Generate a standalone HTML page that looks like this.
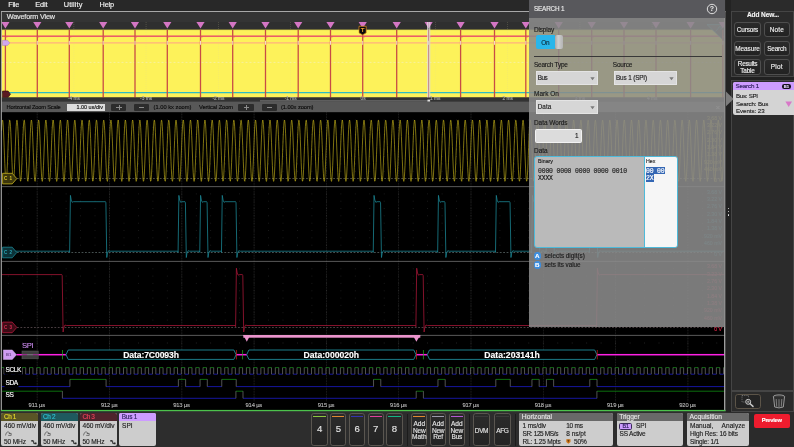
<!DOCTYPE html>
<html lang="en"><head><meta charset="utf-8"><title>Oscilloscope - Search 1</title>
<style>
html,body{margin:0;padding:0;background:#2d2d2d;}
body{width:794px;height:447px;overflow:hidden;position:relative;font-family:"Liberation Sans",sans-serif;}
#root{position:absolute;left:0;top:0;width:794px;height:447px;overflow:hidden;will-change:transform;}
.t{position:absolute;white-space:nowrap;-webkit-text-stroke:0.14px currentColor;}
.b{position:absolute;box-sizing:border-box;}
svg{position:absolute;left:0;top:0;}
</style></head>
<body><div id="root">
<svg width="794" height="447" viewBox="0 0 794 447">
<defs><clipPath id="cpw"><rect x="1.5" y="12" width="723" height="399"/></clipPath></defs>
<rect x="0" y="0" width="794" height="447" fill="#2d2d2d"/>
<rect x="0" y="0" width="726" height="11.2" fill="#282828"/>
<rect x="1" y="11.2" width="724.5" height="0.9" fill="#c8c8c8"/>
<rect x="1.5" y="12" width="723" height="10" fill="#343434"/>
<rect x="1.5" y="22" width="723" height="8" fill="#2f2f2f"/>
<rect x="1.5" y="29.7" width="723.0" height="67.8" fill="#fdf25a"/>
<rect x="1.5" y="29.5" width="723.0" height="0.6" fill="#8a8430" opacity="0.6"/>
<line x1="73.8" y1="22" x2="73.8" y2="98" stroke="#d8d0a0" stroke-width="0.5" stroke-dasharray="1 1" opacity="0.4"/>
<line x1="146.1" y1="22" x2="146.1" y2="98" stroke="#d8d0a0" stroke-width="0.5" stroke-dasharray="1 1" opacity="0.4"/>
<line x1="218.4" y1="22" x2="218.4" y2="98" stroke="#d8d0a0" stroke-width="0.5" stroke-dasharray="1 1" opacity="0.4"/>
<line x1="290.7" y1="22" x2="290.7" y2="98" stroke="#d8d0a0" stroke-width="0.5" stroke-dasharray="1 1" opacity="0.4"/>
<line x1="363.0" y1="22" x2="363.0" y2="98" stroke="#d8d0a0" stroke-width="0.5" stroke-dasharray="1 1" opacity="0.4"/>
<line x1="435.3" y1="22" x2="435.3" y2="98" stroke="#d8d0a0" stroke-width="0.5" stroke-dasharray="1 1" opacity="0.4"/>
<line x1="507.6" y1="22" x2="507.6" y2="98" stroke="#d8d0a0" stroke-width="0.5" stroke-dasharray="1 1" opacity="0.4"/>
<line x1="579.9" y1="22" x2="579.9" y2="98" stroke="#d8d0a0" stroke-width="0.5" stroke-dasharray="1 1" opacity="0.4"/>
<line x1="652.2" y1="22" x2="652.2" y2="98" stroke="#d8d0a0" stroke-width="0.5" stroke-dasharray="1 1" opacity="0.4"/>
<line x1="1.5" y1="62.4" x2="724.5" y2="62.4" stroke="#f4f0c8" stroke-width="0.6" stroke-dasharray="2 2"/>
<rect x="1.5" y="35.5" width="723.0" height="1.35" fill="#e8466a"/>
<rect x="1.5" y="42.1" width="723.0" height="1.5" fill="#ffbc78"/>
<rect x="1.5" y="92.0" width="723.0" height="1.25" fill="#2cbcc4"/>
<path d="M707 24.6 L724.5 24.6 L724.5 41.5 Z" fill="#444" stroke="#2c9aa8" stroke-width="0.7"/><path d="M715.5 31.5 l3 -3.4 M718.5 28 a1.5 1.5 0 1 1 2 1.5" stroke="#2c9aa8" stroke-width="0.7" fill="none"/>
<rect x="4.75" y="30" width="1.3" height="69" fill="#c84c46"/>
<rect x="4.90" y="40.8" width="1" height="4" fill="#fff2e0" opacity="0.85"/>
<rect x="5.40" y="36.5" width="2" height="0.8" fill="#ea5068"/>
<path d="M1.30 22 L9.50 22 L5.40 28.4 Z" fill="#d476c4" clip-path="url(#cpw)"/>
<rect x="36.65" y="30" width="1.3" height="69" fill="#c84c46"/>
<rect x="36.80" y="40.8" width="1" height="4" fill="#fff2e0" opacity="0.85"/>
<rect x="37.30" y="36.5" width="2" height="0.8" fill="#ea5068"/>
<path d="M33.20 22 L41.40 22 L37.30 28.4 Z" fill="#d476c4" clip-path="url(#cpw)"/>
<rect x="68.65" y="30" width="1.3" height="69" fill="#c84c46"/>
<rect x="68.80" y="40.8" width="1" height="4" fill="#fff2e0" opacity="0.85"/>
<rect x="69.30" y="36.5" width="2" height="0.8" fill="#ea5068"/>
<path d="M65.20 22 L73.40 22 L69.30 28.4 Z" fill="#d476c4" clip-path="url(#cpw)"/>
<rect x="102.55" y="30" width="1.3" height="69" fill="#c84c46"/>
<rect x="102.70" y="40.8" width="1" height="4" fill="#fff2e0" opacity="0.85"/>
<rect x="103.20" y="36.5" width="2" height="0.8" fill="#ea5068"/>
<path d="M99.10 22 L107.30 22 L103.20 28.4 Z" fill="#d476c4" clip-path="url(#cpw)"/>
<rect x="134.35" y="30" width="1.3" height="69" fill="#c84c46"/>
<rect x="134.50" y="40.8" width="1" height="4" fill="#fff2e0" opacity="0.85"/>
<rect x="135.00" y="36.5" width="2" height="0.8" fill="#ea5068"/>
<path d="M130.90 22 L139.10 22 L135.00 28.4 Z" fill="#d476c4" clip-path="url(#cpw)"/>
<rect x="166.65" y="30" width="1.3" height="69" fill="#c84c46"/>
<rect x="166.80" y="40.8" width="1" height="4" fill="#fff2e0" opacity="0.85"/>
<rect x="167.30" y="36.5" width="2" height="0.8" fill="#ea5068"/>
<path d="M163.20 22 L171.40 22 L167.30 28.4 Z" fill="#d476c4" clip-path="url(#cpw)"/>
<rect x="199.85" y="30" width="1.3" height="69" fill="#c84c46"/>
<rect x="200.00" y="40.8" width="1" height="4" fill="#fff2e0" opacity="0.85"/>
<rect x="200.50" y="36.5" width="2" height="0.8" fill="#ea5068"/>
<path d="M196.40 22 L204.60 22 L200.50 28.4 Z" fill="#d476c4" clip-path="url(#cpw)"/>
<rect x="232.05" y="30" width="1.3" height="69" fill="#c84c46"/>
<rect x="232.20" y="40.8" width="1" height="4" fill="#fff2e0" opacity="0.85"/>
<rect x="232.70" y="36.5" width="2" height="0.8" fill="#ea5068"/>
<path d="M228.60 22 L236.80 22 L232.70 28.4 Z" fill="#d476c4" clip-path="url(#cpw)"/>
<rect x="264.85" y="30" width="1.3" height="69" fill="#c84c46"/>
<rect x="265.00" y="40.8" width="1" height="4" fill="#fff2e0" opacity="0.85"/>
<rect x="265.50" y="36.5" width="2" height="0.8" fill="#ea5068"/>
<path d="M261.40 22 L269.60 22 L265.50 28.4 Z" fill="#d476c4" clip-path="url(#cpw)"/>
<rect x="297.55" y="30" width="1.3" height="69" fill="#c84c46"/>
<rect x="297.70" y="40.8" width="1" height="4" fill="#fff2e0" opacity="0.85"/>
<rect x="298.20" y="36.5" width="2" height="0.8" fill="#ea5068"/>
<path d="M294.10 22 L302.30 22 L298.20 28.4 Z" fill="#d476c4" clip-path="url(#cpw)"/>
<rect x="329.85" y="30" width="1.3" height="69" fill="#c84c46"/>
<rect x="330.00" y="40.8" width="1" height="4" fill="#fff2e0" opacity="0.85"/>
<rect x="330.50" y="36.5" width="2" height="0.8" fill="#ea5068"/>
<path d="M326.40 22 L334.60 22 L330.50 28.4 Z" fill="#d476c4" clip-path="url(#cpw)"/>
<rect x="362.05" y="30" width="1.3" height="69" fill="#c84c46"/>
<rect x="362.20" y="40.8" width="1" height="4" fill="#fff2e0" opacity="0.85"/>
<rect x="362.70" y="36.5" width="2" height="0.8" fill="#ea5068"/>
<path d="M358.60 22 L366.80 22 L362.70 28.4 Z" fill="#d476c4" clip-path="url(#cpw)"/>
<rect x="396.05" y="30" width="1.3" height="69" fill="#c84c46"/>
<rect x="396.20" y="40.8" width="1" height="4" fill="#fff2e0" opacity="0.85"/>
<rect x="396.70" y="36.5" width="2" height="0.8" fill="#ea5068"/>
<path d="M392.60 22 L400.80 22 L396.70 28.4 Z" fill="#d476c4" clip-path="url(#cpw)"/>
<rect x="427.95" y="30" width="1.3" height="69" fill="#c84c46"/>
<rect x="428.10" y="40.8" width="1" height="4" fill="#fff2e0" opacity="0.85"/>
<rect x="428.60" y="36.5" width="2" height="0.8" fill="#ea5068"/>
<path d="M424.50 22 L432.70 22 L428.60 28.4 Z" fill="#d476c4" clip-path="url(#cpw)"/>
<rect x="459.95" y="30" width="1.3" height="69" fill="#c84c46"/>
<rect x="460.10" y="40.8" width="1" height="4" fill="#fff2e0" opacity="0.85"/>
<rect x="460.60" y="36.5" width="2" height="0.8" fill="#ea5068"/>
<path d="M456.50 22 L464.70 22 L460.60 28.4 Z" fill="#d476c4" clip-path="url(#cpw)"/>
<rect x="493.85" y="30" width="1.3" height="69" fill="#c84c46"/>
<rect x="494.00" y="40.8" width="1" height="4" fill="#fff2e0" opacity="0.85"/>
<rect x="494.50" y="36.5" width="2" height="0.8" fill="#ea5068"/>
<path d="M490.40 22 L498.60 22 L494.50 28.4 Z" fill="#d476c4" clip-path="url(#cpw)"/>
<rect x="525.15" y="30" width="1.3" height="69" fill="#c84c46"/>
<rect x="525.30" y="40.8" width="1" height="4" fill="#fff2e0" opacity="0.85"/>
<rect x="525.80" y="36.5" width="2" height="0.8" fill="#ea5068"/>
<path d="M521.70 22 L529.90 22 L525.80 28.4 Z" fill="#d476c4" clip-path="url(#cpw)"/>
<rect x="558.05" y="30" width="1.3" height="69" fill="#c84c46"/>
<rect x="558.20" y="40.8" width="1" height="4" fill="#fff2e0" opacity="0.85"/>
<rect x="558.70" y="36.5" width="2" height="0.8" fill="#ea5068"/>
<path d="M554.60 22 L562.80 22 L558.70 28.4 Z" fill="#d476c4" clip-path="url(#cpw)"/>
<rect x="591.05" y="30" width="1.3" height="69" fill="#c84c46"/>
<rect x="591.20" y="40.8" width="1" height="4" fill="#fff2e0" opacity="0.85"/>
<rect x="591.70" y="36.5" width="2" height="0.8" fill="#ea5068"/>
<path d="M587.60 22 L595.80 22 L591.70 28.4 Z" fill="#d476c4" clip-path="url(#cpw)"/>
<rect x="623.35" y="30" width="1.3" height="69" fill="#c84c46"/>
<rect x="623.50" y="40.8" width="1" height="4" fill="#fff2e0" opacity="0.85"/>
<rect x="624.00" y="36.5" width="2" height="0.8" fill="#ea5068"/>
<path d="M619.90 22 L628.10 22 L624.00 28.4 Z" fill="#d476c4" clip-path="url(#cpw)"/>
<rect x="655.35" y="30" width="1.3" height="69" fill="#c84c46"/>
<rect x="655.50" y="40.8" width="1" height="4" fill="#fff2e0" opacity="0.85"/>
<rect x="656.00" y="36.5" width="2" height="0.8" fill="#ea5068"/>
<path d="M651.90 22 L660.10 22 L656.00 28.4 Z" fill="#d476c4" clip-path="url(#cpw)"/>
<rect x="689.95" y="30" width="1.3" height="69" fill="#c84c46"/>
<rect x="690.10" y="40.8" width="1" height="4" fill="#fff2e0" opacity="0.85"/>
<rect x="690.60" y="36.5" width="2" height="0.8" fill="#ea5068"/>
<path d="M686.50 22 L694.70 22 L690.60 28.4 Z" fill="#d476c4" clip-path="url(#cpw)"/>
<rect x="722.15" y="30" width="1.3" height="69" fill="#c84c46"/>
<rect x="722.30" y="40.8" width="1" height="4" fill="#fff2e0" opacity="0.85"/>
<rect x="722.80" y="36.5" width="2" height="0.8" fill="#ea5068"/>
<path d="M718.70 22 L726.90 22 L722.80 28.4 Z" fill="#d476c4" clip-path="url(#cpw)"/>
<rect x="427.2" y="22" width="3" height="79.5" fill="#c8c8c8" opacity="0.55"/>
<rect x="427.2" y="22" width="0.7" height="79.5" fill="#e8e8e8" opacity="0.8"/>
<rect x="429.5" y="22" width="0.7" height="79.5" fill="#e8e8e8" opacity="0.8"/>
<path d="M359 26.3 h7.2 v6.6 l-3.6 2 l-3.6 -2 Z" fill="#0a0a0a" stroke="#e89020" stroke-width="0.7"/>
<text x="362.6" y="32.4" font-size="6.2" font-weight="bold" fill="#f0a030" text-anchor="middle" font-family='"Liberation Sans", sans-serif'>T</text>
<path d="M2.5 40.3 h5 l2.3 2.6 l-2.3 2.6 h-5 Z" fill="#cfa6ee" stroke="#9a70c0" stroke-width="0.4"/>
<path d="M2.5 91 h5.6 l2.4 3.2 l-2.4 3.2 h-5.6 Z" fill="#5a1a22" stroke="#30080c" stroke-width="0.6"/>
<rect x="1.5" y="97.5" width="723.0" height="4.2" fill="#323232"/>
<rect x="260" y="100.2" width="168" height="1.4" fill="#6a6a6a"/>
<rect x="427.5" y="99.6" width="2.6" height="2.2" fill="#e0e0e0"/>
<rect x="1.5" y="101.6" width="723.0" height="10.6" fill="#585858"/>
<rect x="1.5" y="112.3" width="723.0" height="298" fill="#000"/>
<line x1="37.20" y1="112.5" x2="37.20" y2="402" stroke="#9a9a9a" stroke-width="0.5" stroke-dasharray="0.8 0.8" opacity="0.5"/>
<line x1="109.50" y1="112.5" x2="109.50" y2="402" stroke="#9a9a9a" stroke-width="0.5" stroke-dasharray="0.8 0.8" opacity="0.5"/>
<line x1="181.80" y1="112.5" x2="181.80" y2="402" stroke="#9a9a9a" stroke-width="0.5" stroke-dasharray="0.8 0.8" opacity="0.5"/>
<line x1="254.10" y1="112.5" x2="254.10" y2="402" stroke="#9a9a9a" stroke-width="0.5" stroke-dasharray="0.8 0.8" opacity="0.5"/>
<line x1="326.40" y1="112.5" x2="326.40" y2="402" stroke="#9a9a9a" stroke-width="0.5" stroke-dasharray="0.8 0.8" opacity="0.5"/>
<line x1="398.70" y1="112.5" x2="398.70" y2="402" stroke="#9a9a9a" stroke-width="0.5" stroke-dasharray="0.8 0.8" opacity="0.5"/>
<line x1="471.00" y1="112.5" x2="471.00" y2="402" stroke="#9a9a9a" stroke-width="0.5" stroke-dasharray="0.8 0.8" opacity="0.5"/>
<line x1="543.30" y1="112.5" x2="543.30" y2="402" stroke="#9a9a9a" stroke-width="0.5" stroke-dasharray="0.8 0.8" opacity="0.5"/>
<line x1="615.60" y1="112.5" x2="615.60" y2="402" stroke="#9a9a9a" stroke-width="0.5" stroke-dasharray="0.8 0.8" opacity="0.5"/>
<line x1="687.90" y1="112.5" x2="687.90" y2="402" stroke="#9a9a9a" stroke-width="0.5" stroke-dasharray="0.8 0.8" opacity="0.5"/>
<path d="M7.9 171.3h0.8M22.3 171.3h0.8M36.8 171.3h0.8M51.3 171.3h0.8M65.7 171.3h0.8M80.2 171.3h0.8M94.6 171.3h0.8M109.1 171.3h0.8M123.6 171.3h0.8M138.0 171.3h0.8M152.5 171.3h0.8M166.9 171.3h0.8M181.4 171.3h0.8M195.9 171.3h0.8M210.3 171.3h0.8M224.8 171.3h0.8M239.2 171.3h0.8M253.7 171.3h0.8M268.2 171.3h0.8M282.6 171.3h0.8M297.1 171.3h0.8M311.5 171.3h0.8M326.0 171.3h0.8M340.5 171.3h0.8M354.9 171.3h0.8M369.4 171.3h0.8M383.8 171.3h0.8M398.3 171.3h0.8M412.8 171.3h0.8M427.2 171.3h0.8M441.7 171.3h0.8M456.1 171.3h0.8M470.6 171.3h0.8M485.1 171.3h0.8M499.5 171.3h0.8M514.0 171.3h0.8M528.4 171.3h0.8M542.9 171.3h0.8M557.4 171.3h0.8M571.8 171.3h0.8M586.3 171.3h0.8M600.7 171.3h0.8M615.2 171.3h0.8M629.7 171.3h0.8M644.1 171.3h0.8M658.6 171.3h0.8M673.0 171.3h0.8M687.5 171.3h0.8M702.0 171.3h0.8M716.4 171.3h0.8M7.9 163.9h0.8M22.3 163.9h0.8M36.8 163.9h0.8M51.3 163.9h0.8M65.7 163.9h0.8M80.2 163.9h0.8M94.6 163.9h0.8M109.1 163.9h0.8M123.6 163.9h0.8M138.0 163.9h0.8M152.5 163.9h0.8M166.9 163.9h0.8M181.4 163.9h0.8M195.9 163.9h0.8M210.3 163.9h0.8M224.8 163.9h0.8M239.2 163.9h0.8M253.7 163.9h0.8M268.2 163.9h0.8M282.6 163.9h0.8M297.1 163.9h0.8M311.5 163.9h0.8M326.0 163.9h0.8M340.5 163.9h0.8M354.9 163.9h0.8M369.4 163.9h0.8M383.8 163.9h0.8M398.3 163.9h0.8M412.8 163.9h0.8M427.2 163.9h0.8M441.7 163.9h0.8M456.1 163.9h0.8M470.6 163.9h0.8M485.1 163.9h0.8M499.5 163.9h0.8M514.0 163.9h0.8M528.4 163.9h0.8M542.9 163.9h0.8M557.4 163.9h0.8M571.8 163.9h0.8M586.3 163.9h0.8M600.7 163.9h0.8M615.2 163.9h0.8M629.7 163.9h0.8M644.1 163.9h0.8M658.6 163.9h0.8M673.0 163.9h0.8M687.5 163.9h0.8M702.0 163.9h0.8M716.4 163.9h0.8M7.9 156.6h0.8M22.3 156.6h0.8M36.8 156.6h0.8M51.3 156.6h0.8M65.7 156.6h0.8M80.2 156.6h0.8M94.6 156.6h0.8M109.1 156.6h0.8M123.6 156.6h0.8M138.0 156.6h0.8M152.5 156.6h0.8M166.9 156.6h0.8M181.4 156.6h0.8M195.9 156.6h0.8M210.3 156.6h0.8M224.8 156.6h0.8M239.2 156.6h0.8M253.7 156.6h0.8M268.2 156.6h0.8M282.6 156.6h0.8M297.1 156.6h0.8M311.5 156.6h0.8M326.0 156.6h0.8M340.5 156.6h0.8M354.9 156.6h0.8M369.4 156.6h0.8M383.8 156.6h0.8M398.3 156.6h0.8M412.8 156.6h0.8M427.2 156.6h0.8M441.7 156.6h0.8M456.1 156.6h0.8M470.6 156.6h0.8M485.1 156.6h0.8M499.5 156.6h0.8M514.0 156.6h0.8M528.4 156.6h0.8M542.9 156.6h0.8M557.4 156.6h0.8M571.8 156.6h0.8M586.3 156.6h0.8M600.7 156.6h0.8M615.2 156.6h0.8M629.7 156.6h0.8M644.1 156.6h0.8M658.6 156.6h0.8M673.0 156.6h0.8M687.5 156.6h0.8M702.0 156.6h0.8M716.4 156.6h0.8M7.9 149.3h0.8M22.3 149.3h0.8M36.8 149.3h0.8M51.3 149.3h0.8M65.7 149.3h0.8M80.2 149.3h0.8M94.6 149.3h0.8M109.1 149.3h0.8M123.6 149.3h0.8M138.0 149.3h0.8M152.5 149.3h0.8M166.9 149.3h0.8M181.4 149.3h0.8M195.9 149.3h0.8M210.3 149.3h0.8M224.8 149.3h0.8M239.2 149.3h0.8M253.7 149.3h0.8M268.2 149.3h0.8M282.6 149.3h0.8M297.1 149.3h0.8M311.5 149.3h0.8M326.0 149.3h0.8M340.5 149.3h0.8M354.9 149.3h0.8M369.4 149.3h0.8M383.8 149.3h0.8M398.3 149.3h0.8M412.8 149.3h0.8M427.2 149.3h0.8M441.7 149.3h0.8M456.1 149.3h0.8M470.6 149.3h0.8M485.1 149.3h0.8M499.5 149.3h0.8M514.0 149.3h0.8M528.4 149.3h0.8M542.9 149.3h0.8M557.4 149.3h0.8M571.8 149.3h0.8M586.3 149.3h0.8M600.7 149.3h0.8M615.2 149.3h0.8M629.7 149.3h0.8M644.1 149.3h0.8M658.6 149.3h0.8M673.0 149.3h0.8M687.5 149.3h0.8M702.0 149.3h0.8M716.4 149.3h0.8M7.9 141.9h0.8M22.3 141.9h0.8M36.8 141.9h0.8M51.3 141.9h0.8M65.7 141.9h0.8M80.2 141.9h0.8M94.6 141.9h0.8M109.1 141.9h0.8M123.6 141.9h0.8M138.0 141.9h0.8M152.5 141.9h0.8M166.9 141.9h0.8M181.4 141.9h0.8M195.9 141.9h0.8M210.3 141.9h0.8M224.8 141.9h0.8M239.2 141.9h0.8M253.7 141.9h0.8M268.2 141.9h0.8M282.6 141.9h0.8M297.1 141.9h0.8M311.5 141.9h0.8M326.0 141.9h0.8M340.5 141.9h0.8M354.9 141.9h0.8M369.4 141.9h0.8M383.8 141.9h0.8M398.3 141.9h0.8M412.8 141.9h0.8M427.2 141.9h0.8M441.7 141.9h0.8M456.1 141.9h0.8M470.6 141.9h0.8M485.1 141.9h0.8M499.5 141.9h0.8M514.0 141.9h0.8M528.4 141.9h0.8M542.9 141.9h0.8M557.4 141.9h0.8M571.8 141.9h0.8M586.3 141.9h0.8M600.7 141.9h0.8M615.2 141.9h0.8M629.7 141.9h0.8M644.1 141.9h0.8M658.6 141.9h0.8M673.0 141.9h0.8M687.5 141.9h0.8M702.0 141.9h0.8M716.4 141.9h0.8M7.9 134.6h0.8M22.3 134.6h0.8M36.8 134.6h0.8M51.3 134.6h0.8M65.7 134.6h0.8M80.2 134.6h0.8M94.6 134.6h0.8M109.1 134.6h0.8M123.6 134.6h0.8M138.0 134.6h0.8M152.5 134.6h0.8M166.9 134.6h0.8M181.4 134.6h0.8M195.9 134.6h0.8M210.3 134.6h0.8M224.8 134.6h0.8M239.2 134.6h0.8M253.7 134.6h0.8M268.2 134.6h0.8M282.6 134.6h0.8M297.1 134.6h0.8M311.5 134.6h0.8M326.0 134.6h0.8M340.5 134.6h0.8M354.9 134.6h0.8M369.4 134.6h0.8M383.8 134.6h0.8M398.3 134.6h0.8M412.8 134.6h0.8M427.2 134.6h0.8M441.7 134.6h0.8M456.1 134.6h0.8M470.6 134.6h0.8M485.1 134.6h0.8M499.5 134.6h0.8M514.0 134.6h0.8M528.4 134.6h0.8M542.9 134.6h0.8M557.4 134.6h0.8M571.8 134.6h0.8M586.3 134.6h0.8M600.7 134.6h0.8M615.2 134.6h0.8M629.7 134.6h0.8M644.1 134.6h0.8M658.6 134.6h0.8M673.0 134.6h0.8M687.5 134.6h0.8M702.0 134.6h0.8M716.4 134.6h0.8M7.9 127.3h0.8M22.3 127.3h0.8M36.8 127.3h0.8M51.3 127.3h0.8M65.7 127.3h0.8M80.2 127.3h0.8M94.6 127.3h0.8M109.1 127.3h0.8M123.6 127.3h0.8M138.0 127.3h0.8M152.5 127.3h0.8M166.9 127.3h0.8M181.4 127.3h0.8M195.9 127.3h0.8M210.3 127.3h0.8M224.8 127.3h0.8M239.2 127.3h0.8M253.7 127.3h0.8M268.2 127.3h0.8M282.6 127.3h0.8M297.1 127.3h0.8M311.5 127.3h0.8M326.0 127.3h0.8M340.5 127.3h0.8M354.9 127.3h0.8M369.4 127.3h0.8M383.8 127.3h0.8M398.3 127.3h0.8M412.8 127.3h0.8M427.2 127.3h0.8M441.7 127.3h0.8M456.1 127.3h0.8M470.6 127.3h0.8M485.1 127.3h0.8M499.5 127.3h0.8M514.0 127.3h0.8M528.4 127.3h0.8M542.9 127.3h0.8M557.4 127.3h0.8M571.8 127.3h0.8M586.3 127.3h0.8M600.7 127.3h0.8M615.2 127.3h0.8M629.7 127.3h0.8M644.1 127.3h0.8M658.6 127.3h0.8M673.0 127.3h0.8M687.5 127.3h0.8M702.0 127.3h0.8M716.4 127.3h0.8M7.9 120.0h0.8M22.3 120.0h0.8M36.8 120.0h0.8M51.3 120.0h0.8M65.7 120.0h0.8M80.2 120.0h0.8M94.6 120.0h0.8M109.1 120.0h0.8M123.6 120.0h0.8M138.0 120.0h0.8M152.5 120.0h0.8M166.9 120.0h0.8M181.4 120.0h0.8M195.9 120.0h0.8M210.3 120.0h0.8M224.8 120.0h0.8M239.2 120.0h0.8M253.7 120.0h0.8M268.2 120.0h0.8M282.6 120.0h0.8M297.1 120.0h0.8M311.5 120.0h0.8M326.0 120.0h0.8M340.5 120.0h0.8M354.9 120.0h0.8M369.4 120.0h0.8M383.8 120.0h0.8M398.3 120.0h0.8M412.8 120.0h0.8M427.2 120.0h0.8M441.7 120.0h0.8M456.1 120.0h0.8M470.6 120.0h0.8M485.1 120.0h0.8M499.5 120.0h0.8M514.0 120.0h0.8M528.4 120.0h0.8M542.9 120.0h0.8M557.4 120.0h0.8M571.8 120.0h0.8M586.3 120.0h0.8M600.7 120.0h0.8M615.2 120.0h0.8M629.7 120.0h0.8M644.1 120.0h0.8M658.6 120.0h0.8M673.0 120.0h0.8M687.5 120.0h0.8M702.0 120.0h0.8M716.4 120.0h0.8M7.9 245.2h0.8M22.3 245.2h0.8M36.8 245.2h0.8M51.3 245.2h0.8M65.7 245.2h0.8M80.2 245.2h0.8M94.6 245.2h0.8M109.1 245.2h0.8M123.6 245.2h0.8M138.0 245.2h0.8M152.5 245.2h0.8M166.9 245.2h0.8M181.4 245.2h0.8M195.9 245.2h0.8M210.3 245.2h0.8M224.8 245.2h0.8M239.2 245.2h0.8M253.7 245.2h0.8M268.2 245.2h0.8M282.6 245.2h0.8M297.1 245.2h0.8M311.5 245.2h0.8M326.0 245.2h0.8M340.5 245.2h0.8M354.9 245.2h0.8M369.4 245.2h0.8M383.8 245.2h0.8M398.3 245.2h0.8M412.8 245.2h0.8M427.2 245.2h0.8M441.7 245.2h0.8M456.1 245.2h0.8M470.6 245.2h0.8M485.1 245.2h0.8M499.5 245.2h0.8M514.0 245.2h0.8M528.4 245.2h0.8M542.9 245.2h0.8M557.4 245.2h0.8M571.8 245.2h0.8M586.3 245.2h0.8M600.7 245.2h0.8M615.2 245.2h0.8M629.7 245.2h0.8M644.1 245.2h0.8M658.6 245.2h0.8M673.0 245.2h0.8M687.5 245.2h0.8M702.0 245.2h0.8M716.4 245.2h0.8M7.9 237.8h0.8M22.3 237.8h0.8M36.8 237.8h0.8M51.3 237.8h0.8M65.7 237.8h0.8M80.2 237.8h0.8M94.6 237.8h0.8M109.1 237.8h0.8M123.6 237.8h0.8M138.0 237.8h0.8M152.5 237.8h0.8M166.9 237.8h0.8M181.4 237.8h0.8M195.9 237.8h0.8M210.3 237.8h0.8M224.8 237.8h0.8M239.2 237.8h0.8M253.7 237.8h0.8M268.2 237.8h0.8M282.6 237.8h0.8M297.1 237.8h0.8M311.5 237.8h0.8M326.0 237.8h0.8M340.5 237.8h0.8M354.9 237.8h0.8M369.4 237.8h0.8M383.8 237.8h0.8M398.3 237.8h0.8M412.8 237.8h0.8M427.2 237.8h0.8M441.7 237.8h0.8M456.1 237.8h0.8M470.6 237.8h0.8M485.1 237.8h0.8M499.5 237.8h0.8M514.0 237.8h0.8M528.4 237.8h0.8M542.9 237.8h0.8M557.4 237.8h0.8M571.8 237.8h0.8M586.3 237.8h0.8M600.7 237.8h0.8M615.2 237.8h0.8M629.7 237.8h0.8M644.1 237.8h0.8M658.6 237.8h0.8M673.0 237.8h0.8M687.5 237.8h0.8M702.0 237.8h0.8M716.4 237.8h0.8M7.9 230.5h0.8M22.3 230.5h0.8M36.8 230.5h0.8M51.3 230.5h0.8M65.7 230.5h0.8M80.2 230.5h0.8M94.6 230.5h0.8M109.1 230.5h0.8M123.6 230.5h0.8M138.0 230.5h0.8M152.5 230.5h0.8M166.9 230.5h0.8M181.4 230.5h0.8M195.9 230.5h0.8M210.3 230.5h0.8M224.8 230.5h0.8M239.2 230.5h0.8M253.7 230.5h0.8M268.2 230.5h0.8M282.6 230.5h0.8M297.1 230.5h0.8M311.5 230.5h0.8M326.0 230.5h0.8M340.5 230.5h0.8M354.9 230.5h0.8M369.4 230.5h0.8M383.8 230.5h0.8M398.3 230.5h0.8M412.8 230.5h0.8M427.2 230.5h0.8M441.7 230.5h0.8M456.1 230.5h0.8M470.6 230.5h0.8M485.1 230.5h0.8M499.5 230.5h0.8M514.0 230.5h0.8M528.4 230.5h0.8M542.9 230.5h0.8M557.4 230.5h0.8M571.8 230.5h0.8M586.3 230.5h0.8M600.7 230.5h0.8M615.2 230.5h0.8M629.7 230.5h0.8M644.1 230.5h0.8M658.6 230.5h0.8M673.0 230.5h0.8M687.5 230.5h0.8M702.0 230.5h0.8M716.4 230.5h0.8M7.9 223.2h0.8M22.3 223.2h0.8M36.8 223.2h0.8M51.3 223.2h0.8M65.7 223.2h0.8M80.2 223.2h0.8M94.6 223.2h0.8M109.1 223.2h0.8M123.6 223.2h0.8M138.0 223.2h0.8M152.5 223.2h0.8M166.9 223.2h0.8M181.4 223.2h0.8M195.9 223.2h0.8M210.3 223.2h0.8M224.8 223.2h0.8M239.2 223.2h0.8M253.7 223.2h0.8M268.2 223.2h0.8M282.6 223.2h0.8M297.1 223.2h0.8M311.5 223.2h0.8M326.0 223.2h0.8M340.5 223.2h0.8M354.9 223.2h0.8M369.4 223.2h0.8M383.8 223.2h0.8M398.3 223.2h0.8M412.8 223.2h0.8M427.2 223.2h0.8M441.7 223.2h0.8M456.1 223.2h0.8M470.6 223.2h0.8M485.1 223.2h0.8M499.5 223.2h0.8M514.0 223.2h0.8M528.4 223.2h0.8M542.9 223.2h0.8M557.4 223.2h0.8M571.8 223.2h0.8M586.3 223.2h0.8M600.7 223.2h0.8M615.2 223.2h0.8M629.7 223.2h0.8M644.1 223.2h0.8M658.6 223.2h0.8M673.0 223.2h0.8M687.5 223.2h0.8M702.0 223.2h0.8M716.4 223.2h0.8M7.9 215.8h0.8M22.3 215.8h0.8M36.8 215.8h0.8M51.3 215.8h0.8M65.7 215.8h0.8M80.2 215.8h0.8M94.6 215.8h0.8M109.1 215.8h0.8M123.6 215.8h0.8M138.0 215.8h0.8M152.5 215.8h0.8M166.9 215.8h0.8M181.4 215.8h0.8M195.9 215.8h0.8M210.3 215.8h0.8M224.8 215.8h0.8M239.2 215.8h0.8M253.7 215.8h0.8M268.2 215.8h0.8M282.6 215.8h0.8M297.1 215.8h0.8M311.5 215.8h0.8M326.0 215.8h0.8M340.5 215.8h0.8M354.9 215.8h0.8M369.4 215.8h0.8M383.8 215.8h0.8M398.3 215.8h0.8M412.8 215.8h0.8M427.2 215.8h0.8M441.7 215.8h0.8M456.1 215.8h0.8M470.6 215.8h0.8M485.1 215.8h0.8M499.5 215.8h0.8M514.0 215.8h0.8M528.4 215.8h0.8M542.9 215.8h0.8M557.4 215.8h0.8M571.8 215.8h0.8M586.3 215.8h0.8M600.7 215.8h0.8M615.2 215.8h0.8M629.7 215.8h0.8M644.1 215.8h0.8M658.6 215.8h0.8M673.0 215.8h0.8M687.5 215.8h0.8M702.0 215.8h0.8M716.4 215.8h0.8M7.9 208.5h0.8M22.3 208.5h0.8M36.8 208.5h0.8M51.3 208.5h0.8M65.7 208.5h0.8M80.2 208.5h0.8M94.6 208.5h0.8M109.1 208.5h0.8M123.6 208.5h0.8M138.0 208.5h0.8M152.5 208.5h0.8M166.9 208.5h0.8M181.4 208.5h0.8M195.9 208.5h0.8M210.3 208.5h0.8M224.8 208.5h0.8M239.2 208.5h0.8M253.7 208.5h0.8M268.2 208.5h0.8M282.6 208.5h0.8M297.1 208.5h0.8M311.5 208.5h0.8M326.0 208.5h0.8M340.5 208.5h0.8M354.9 208.5h0.8M369.4 208.5h0.8M383.8 208.5h0.8M398.3 208.5h0.8M412.8 208.5h0.8M427.2 208.5h0.8M441.7 208.5h0.8M456.1 208.5h0.8M470.6 208.5h0.8M485.1 208.5h0.8M499.5 208.5h0.8M514.0 208.5h0.8M528.4 208.5h0.8M542.9 208.5h0.8M557.4 208.5h0.8M571.8 208.5h0.8M586.3 208.5h0.8M600.7 208.5h0.8M615.2 208.5h0.8M629.7 208.5h0.8M644.1 208.5h0.8M658.6 208.5h0.8M673.0 208.5h0.8M687.5 208.5h0.8M702.0 208.5h0.8M716.4 208.5h0.8M7.9 201.2h0.8M22.3 201.2h0.8M36.8 201.2h0.8M51.3 201.2h0.8M65.7 201.2h0.8M80.2 201.2h0.8M94.6 201.2h0.8M109.1 201.2h0.8M123.6 201.2h0.8M138.0 201.2h0.8M152.5 201.2h0.8M166.9 201.2h0.8M181.4 201.2h0.8M195.9 201.2h0.8M210.3 201.2h0.8M224.8 201.2h0.8M239.2 201.2h0.8M253.7 201.2h0.8M268.2 201.2h0.8M282.6 201.2h0.8M297.1 201.2h0.8M311.5 201.2h0.8M326.0 201.2h0.8M340.5 201.2h0.8M354.9 201.2h0.8M369.4 201.2h0.8M383.8 201.2h0.8M398.3 201.2h0.8M412.8 201.2h0.8M427.2 201.2h0.8M441.7 201.2h0.8M456.1 201.2h0.8M470.6 201.2h0.8M485.1 201.2h0.8M499.5 201.2h0.8M514.0 201.2h0.8M528.4 201.2h0.8M542.9 201.2h0.8M557.4 201.2h0.8M571.8 201.2h0.8M586.3 201.2h0.8M600.7 201.2h0.8M615.2 201.2h0.8M629.7 201.2h0.8M644.1 201.2h0.8M658.6 201.2h0.8M673.0 201.2h0.8M687.5 201.2h0.8M702.0 201.2h0.8M716.4 201.2h0.8M7.9 193.9h0.8M22.3 193.9h0.8M36.8 193.9h0.8M51.3 193.9h0.8M65.7 193.9h0.8M80.2 193.9h0.8M94.6 193.9h0.8M109.1 193.9h0.8M123.6 193.9h0.8M138.0 193.9h0.8M152.5 193.9h0.8M166.9 193.9h0.8M181.4 193.9h0.8M195.9 193.9h0.8M210.3 193.9h0.8M224.8 193.9h0.8M239.2 193.9h0.8M253.7 193.9h0.8M268.2 193.9h0.8M282.6 193.9h0.8M297.1 193.9h0.8M311.5 193.9h0.8M326.0 193.9h0.8M340.5 193.9h0.8M354.9 193.9h0.8M369.4 193.9h0.8M383.8 193.9h0.8M398.3 193.9h0.8M412.8 193.9h0.8M427.2 193.9h0.8M441.7 193.9h0.8M456.1 193.9h0.8M470.6 193.9h0.8M485.1 193.9h0.8M499.5 193.9h0.8M514.0 193.9h0.8M528.4 193.9h0.8M542.9 193.9h0.8M557.4 193.9h0.8M571.8 193.9h0.8M586.3 193.9h0.8M600.7 193.9h0.8M615.2 193.9h0.8M629.7 193.9h0.8M644.1 193.9h0.8M658.6 193.9h0.8M673.0 193.9h0.8M687.5 193.9h0.8M702.0 193.9h0.8M716.4 193.9h0.8M7.9 320.1h0.8M22.3 320.1h0.8M36.8 320.1h0.8M51.3 320.1h0.8M65.7 320.1h0.8M80.2 320.1h0.8M94.6 320.1h0.8M109.1 320.1h0.8M123.6 320.1h0.8M138.0 320.1h0.8M152.5 320.1h0.8M166.9 320.1h0.8M181.4 320.1h0.8M195.9 320.1h0.8M210.3 320.1h0.8M224.8 320.1h0.8M239.2 320.1h0.8M253.7 320.1h0.8M268.2 320.1h0.8M282.6 320.1h0.8M297.1 320.1h0.8M311.5 320.1h0.8M326.0 320.1h0.8M340.5 320.1h0.8M354.9 320.1h0.8M369.4 320.1h0.8M383.8 320.1h0.8M398.3 320.1h0.8M412.8 320.1h0.8M427.2 320.1h0.8M441.7 320.1h0.8M456.1 320.1h0.8M470.6 320.1h0.8M485.1 320.1h0.8M499.5 320.1h0.8M514.0 320.1h0.8M528.4 320.1h0.8M542.9 320.1h0.8M557.4 320.1h0.8M571.8 320.1h0.8M586.3 320.1h0.8M600.7 320.1h0.8M615.2 320.1h0.8M629.7 320.1h0.8M644.1 320.1h0.8M658.6 320.1h0.8M673.0 320.1h0.8M687.5 320.1h0.8M702.0 320.1h0.8M716.4 320.1h0.8M7.9 312.7h0.8M22.3 312.7h0.8M36.8 312.7h0.8M51.3 312.7h0.8M65.7 312.7h0.8M80.2 312.7h0.8M94.6 312.7h0.8M109.1 312.7h0.8M123.6 312.7h0.8M138.0 312.7h0.8M152.5 312.7h0.8M166.9 312.7h0.8M181.4 312.7h0.8M195.9 312.7h0.8M210.3 312.7h0.8M224.8 312.7h0.8M239.2 312.7h0.8M253.7 312.7h0.8M268.2 312.7h0.8M282.6 312.7h0.8M297.1 312.7h0.8M311.5 312.7h0.8M326.0 312.7h0.8M340.5 312.7h0.8M354.9 312.7h0.8M369.4 312.7h0.8M383.8 312.7h0.8M398.3 312.7h0.8M412.8 312.7h0.8M427.2 312.7h0.8M441.7 312.7h0.8M456.1 312.7h0.8M470.6 312.7h0.8M485.1 312.7h0.8M499.5 312.7h0.8M514.0 312.7h0.8M528.4 312.7h0.8M542.9 312.7h0.8M557.4 312.7h0.8M571.8 312.7h0.8M586.3 312.7h0.8M600.7 312.7h0.8M615.2 312.7h0.8M629.7 312.7h0.8M644.1 312.7h0.8M658.6 312.7h0.8M673.0 312.7h0.8M687.5 312.7h0.8M702.0 312.7h0.8M716.4 312.7h0.8M7.9 305.4h0.8M22.3 305.4h0.8M36.8 305.4h0.8M51.3 305.4h0.8M65.7 305.4h0.8M80.2 305.4h0.8M94.6 305.4h0.8M109.1 305.4h0.8M123.6 305.4h0.8M138.0 305.4h0.8M152.5 305.4h0.8M166.9 305.4h0.8M181.4 305.4h0.8M195.9 305.4h0.8M210.3 305.4h0.8M224.8 305.4h0.8M239.2 305.4h0.8M253.7 305.4h0.8M268.2 305.4h0.8M282.6 305.4h0.8M297.1 305.4h0.8M311.5 305.4h0.8M326.0 305.4h0.8M340.5 305.4h0.8M354.9 305.4h0.8M369.4 305.4h0.8M383.8 305.4h0.8M398.3 305.4h0.8M412.8 305.4h0.8M427.2 305.4h0.8M441.7 305.4h0.8M456.1 305.4h0.8M470.6 305.4h0.8M485.1 305.4h0.8M499.5 305.4h0.8M514.0 305.4h0.8M528.4 305.4h0.8M542.9 305.4h0.8M557.4 305.4h0.8M571.8 305.4h0.8M586.3 305.4h0.8M600.7 305.4h0.8M615.2 305.4h0.8M629.7 305.4h0.8M644.1 305.4h0.8M658.6 305.4h0.8M673.0 305.4h0.8M687.5 305.4h0.8M702.0 305.4h0.8M716.4 305.4h0.8M7.9 298.1h0.8M22.3 298.1h0.8M36.8 298.1h0.8M51.3 298.1h0.8M65.7 298.1h0.8M80.2 298.1h0.8M94.6 298.1h0.8M109.1 298.1h0.8M123.6 298.1h0.8M138.0 298.1h0.8M152.5 298.1h0.8M166.9 298.1h0.8M181.4 298.1h0.8M195.9 298.1h0.8M210.3 298.1h0.8M224.8 298.1h0.8M239.2 298.1h0.8M253.7 298.1h0.8M268.2 298.1h0.8M282.6 298.1h0.8M297.1 298.1h0.8M311.5 298.1h0.8M326.0 298.1h0.8M340.5 298.1h0.8M354.9 298.1h0.8M369.4 298.1h0.8M383.8 298.1h0.8M398.3 298.1h0.8M412.8 298.1h0.8M427.2 298.1h0.8M441.7 298.1h0.8M456.1 298.1h0.8M470.6 298.1h0.8M485.1 298.1h0.8M499.5 298.1h0.8M514.0 298.1h0.8M528.4 298.1h0.8M542.9 298.1h0.8M557.4 298.1h0.8M571.8 298.1h0.8M586.3 298.1h0.8M600.7 298.1h0.8M615.2 298.1h0.8M629.7 298.1h0.8M644.1 298.1h0.8M658.6 298.1h0.8M673.0 298.1h0.8M687.5 298.1h0.8M702.0 298.1h0.8M716.4 298.1h0.8M7.9 290.8h0.8M22.3 290.8h0.8M36.8 290.8h0.8M51.3 290.8h0.8M65.7 290.8h0.8M80.2 290.8h0.8M94.6 290.8h0.8M109.1 290.8h0.8M123.6 290.8h0.8M138.0 290.8h0.8M152.5 290.8h0.8M166.9 290.8h0.8M181.4 290.8h0.8M195.9 290.8h0.8M210.3 290.8h0.8M224.8 290.8h0.8M239.2 290.8h0.8M253.7 290.8h0.8M268.2 290.8h0.8M282.6 290.8h0.8M297.1 290.8h0.8M311.5 290.8h0.8M326.0 290.8h0.8M340.5 290.8h0.8M354.9 290.8h0.8M369.4 290.8h0.8M383.8 290.8h0.8M398.3 290.8h0.8M412.8 290.8h0.8M427.2 290.8h0.8M441.7 290.8h0.8M456.1 290.8h0.8M470.6 290.8h0.8M485.1 290.8h0.8M499.5 290.8h0.8M514.0 290.8h0.8M528.4 290.8h0.8M542.9 290.8h0.8M557.4 290.8h0.8M571.8 290.8h0.8M586.3 290.8h0.8M600.7 290.8h0.8M615.2 290.8h0.8M629.7 290.8h0.8M644.1 290.8h0.8M658.6 290.8h0.8M673.0 290.8h0.8M687.5 290.8h0.8M702.0 290.8h0.8M716.4 290.8h0.8M7.9 283.4h0.8M22.3 283.4h0.8M36.8 283.4h0.8M51.3 283.4h0.8M65.7 283.4h0.8M80.2 283.4h0.8M94.6 283.4h0.8M109.1 283.4h0.8M123.6 283.4h0.8M138.0 283.4h0.8M152.5 283.4h0.8M166.9 283.4h0.8M181.4 283.4h0.8M195.9 283.4h0.8M210.3 283.4h0.8M224.8 283.4h0.8M239.2 283.4h0.8M253.7 283.4h0.8M268.2 283.4h0.8M282.6 283.4h0.8M297.1 283.4h0.8M311.5 283.4h0.8M326.0 283.4h0.8M340.5 283.4h0.8M354.9 283.4h0.8M369.4 283.4h0.8M383.8 283.4h0.8M398.3 283.4h0.8M412.8 283.4h0.8M427.2 283.4h0.8M441.7 283.4h0.8M456.1 283.4h0.8M470.6 283.4h0.8M485.1 283.4h0.8M499.5 283.4h0.8M514.0 283.4h0.8M528.4 283.4h0.8M542.9 283.4h0.8M557.4 283.4h0.8M571.8 283.4h0.8M586.3 283.4h0.8M600.7 283.4h0.8M615.2 283.4h0.8M629.7 283.4h0.8M644.1 283.4h0.8M658.6 283.4h0.8M673.0 283.4h0.8M687.5 283.4h0.8M702.0 283.4h0.8M716.4 283.4h0.8M7.9 276.1h0.8M22.3 276.1h0.8M36.8 276.1h0.8M51.3 276.1h0.8M65.7 276.1h0.8M80.2 276.1h0.8M94.6 276.1h0.8M109.1 276.1h0.8M123.6 276.1h0.8M138.0 276.1h0.8M152.5 276.1h0.8M166.9 276.1h0.8M181.4 276.1h0.8M195.9 276.1h0.8M210.3 276.1h0.8M224.8 276.1h0.8M239.2 276.1h0.8M253.7 276.1h0.8M268.2 276.1h0.8M282.6 276.1h0.8M297.1 276.1h0.8M311.5 276.1h0.8M326.0 276.1h0.8M340.5 276.1h0.8M354.9 276.1h0.8M369.4 276.1h0.8M383.8 276.1h0.8M398.3 276.1h0.8M412.8 276.1h0.8M427.2 276.1h0.8M441.7 276.1h0.8M456.1 276.1h0.8M470.6 276.1h0.8M485.1 276.1h0.8M499.5 276.1h0.8M514.0 276.1h0.8M528.4 276.1h0.8M542.9 276.1h0.8M557.4 276.1h0.8M571.8 276.1h0.8M586.3 276.1h0.8M600.7 276.1h0.8M615.2 276.1h0.8M629.7 276.1h0.8M644.1 276.1h0.8M658.6 276.1h0.8M673.0 276.1h0.8M687.5 276.1h0.8M702.0 276.1h0.8M716.4 276.1h0.8M7.9 268.8h0.8M22.3 268.8h0.8M36.8 268.8h0.8M51.3 268.8h0.8M65.7 268.8h0.8M80.2 268.8h0.8M94.6 268.8h0.8M109.1 268.8h0.8M123.6 268.8h0.8M138.0 268.8h0.8M152.5 268.8h0.8M166.9 268.8h0.8M181.4 268.8h0.8M195.9 268.8h0.8M210.3 268.8h0.8M224.8 268.8h0.8M239.2 268.8h0.8M253.7 268.8h0.8M268.2 268.8h0.8M282.6 268.8h0.8M297.1 268.8h0.8M311.5 268.8h0.8M326.0 268.8h0.8M340.5 268.8h0.8M354.9 268.8h0.8M369.4 268.8h0.8M383.8 268.8h0.8M398.3 268.8h0.8M412.8 268.8h0.8M427.2 268.8h0.8M441.7 268.8h0.8M456.1 268.8h0.8M470.6 268.8h0.8M485.1 268.8h0.8M499.5 268.8h0.8M514.0 268.8h0.8M528.4 268.8h0.8M542.9 268.8h0.8M557.4 268.8h0.8M571.8 268.8h0.8M586.3 268.8h0.8M600.7 268.8h0.8M615.2 268.8h0.8M629.7 268.8h0.8M644.1 268.8h0.8M658.6 268.8h0.8M673.0 268.8h0.8M687.5 268.8h0.8M702.0 268.8h0.8M716.4 268.8h0.8" stroke="#8a8a8a" stroke-width="0.6" opacity="0.38" fill="none"/>
<path d="M7.9 343.0h0.8M22.3 343.0h0.8M36.8 343.0h0.8M51.3 343.0h0.8M65.7 343.0h0.8M80.2 343.0h0.8M94.6 343.0h0.8M109.1 343.0h0.8M123.6 343.0h0.8M138.0 343.0h0.8M152.5 343.0h0.8M166.9 343.0h0.8M181.4 343.0h0.8M195.9 343.0h0.8M210.3 343.0h0.8M224.8 343.0h0.8M239.2 343.0h0.8M253.7 343.0h0.8M268.2 343.0h0.8M282.6 343.0h0.8M297.1 343.0h0.8M311.5 343.0h0.8M326.0 343.0h0.8M340.5 343.0h0.8M354.9 343.0h0.8M369.4 343.0h0.8M383.8 343.0h0.8M398.3 343.0h0.8M412.8 343.0h0.8M427.2 343.0h0.8M441.7 343.0h0.8M456.1 343.0h0.8M470.6 343.0h0.8M485.1 343.0h0.8M499.5 343.0h0.8M514.0 343.0h0.8M528.4 343.0h0.8M542.9 343.0h0.8M557.4 343.0h0.8M571.8 343.0h0.8M586.3 343.0h0.8M600.7 343.0h0.8M615.2 343.0h0.8M629.7 343.0h0.8M644.1 343.0h0.8M658.6 343.0h0.8M673.0 343.0h0.8M687.5 343.0h0.8M702.0 343.0h0.8M716.4 343.0h0.8" stroke="#8a8a8a" stroke-width="0.6" opacity="0.5" fill="none"/>
<rect x="1.5" y="186.29999999999998" width="723.0" height="0.8" fill="#707070"/>
<rect x="1.5" y="260.90000000000003" width="723.0" height="0.8" fill="#707070"/>
<rect x="1.5" y="334.90000000000003" width="723.0" height="0.8" fill="#707070"/>
<line x1="17" y1="178.6" x2="724.5" y2="178.6" stroke="#d8d8c0" stroke-width="0.6" stroke-dasharray="1.8 1.6" opacity="0.62"/>
<line x1="17" y1="252.5" x2="724.5" y2="252.5" stroke="#c0d8d8" stroke-width="0.6" stroke-dasharray="1.8 1.6" opacity="0.62"/>
<line x1="17" y1="327.4" x2="724.5" y2="327.4" stroke="#e0c0c8" stroke-width="0.6" stroke-dasharray="1.8 1.6" opacity="0.62"/>
<path d="M1.50 130.88 L1.80 125.51 L2.10 121.84 L2.40 120.12 L2.70 120.46 L3.00 122.85 L3.30 127.13 L3.60 132.99 L3.90 140.05 L4.20 147.84 L4.50 155.81 L4.80 163.44 L5.10 170.21 L5.40 175.66 L5.70 179.42 L6.00 181.25 L6.30 181.00 L6.60 178.71 L6.90 174.53 L7.20 168.73 L7.50 161.72 L7.80 153.96 L8.10 145.98 L8.40 138.32 L8.70 131.50 L9.00 125.97 L9.30 122.12 L9.60 120.20 L9.90 120.33 L10.20 122.53 L10.50 126.62 L10.80 132.34 L11.10 139.31 L11.40 147.04 L11.70 155.02 L12.00 162.71 L12.30 169.59 L12.60 175.19 L12.90 179.13 L13.20 181.16 L13.50 181.12 L13.80 179.03 L14.10 175.03 L14.40 169.38 L14.70 162.46 L15.00 154.76 L15.30 146.78 L15.60 139.06 L15.90 132.13 L16.20 126.46 L16.50 122.42 L16.80 120.30 L17.10 120.23 L17.40 122.22 L17.70 126.13 L18.00 131.71 L18.30 138.57 L18.60 146.25 L18.90 154.23 L19.20 161.97 L19.50 168.95 L19.80 174.70 L20.10 178.82 L20.40 181.05 L20.70 181.22 L21.00 179.33 L21.30 175.51 L21.60 170.00 L21.90 163.20 L22.20 155.55 L22.50 147.57 L22.80 139.80 L23.10 132.77 L23.40 126.96 L23.70 122.74 L24.00 120.42 L24.30 120.14 L24.60 121.93 L24.90 125.66 L25.20 131.09 L25.50 137.84 L25.80 145.46 L26.10 153.43 L26.40 161.22 L26.70 168.30 L27.00 174.19 L27.30 178.49 L27.60 180.91 L27.90 181.30 L28.20 179.61 L28.50 175.97 L28.80 170.62 L29.10 163.93 L29.40 156.34 L29.70 148.37 L30.00 140.56 L30.30 133.43 L30.60 127.47 L30.90 123.08 L31.20 120.56 L31.50 120.07 L31.80 121.66 L32.10 125.21 L32.40 130.48 L32.70 137.11 L33.00 144.67 L33.30 152.63 L33.60 160.47 L33.90 167.64 L34.20 173.67 L34.50 178.14 L34.80 180.76 L35.10 181.35 L35.40 179.87 L35.70 176.41 L36.00 171.22 L36.30 164.64 L36.60 157.12 L36.90 149.17 L37.20 141.31 L37.50 134.10 L37.80 128.00 L38.10 123.44 L38.40 120.72 L38.70 120.03 L39.00 121.41 L39.30 124.77 L39.60 129.88 L39.90 136.40 L40.20 143.89 L40.50 151.83 L40.80 159.70 L41.10 166.96 L41.40 173.13 L41.70 177.77 L42.00 180.59 L42.30 181.39 L42.60 180.11 L42.90 176.84 L43.20 171.81 L43.50 165.35 L43.80 157.90 L44.10 149.97 L44.40 142.08 L44.70 134.78 L45.00 128.55 L45.30 123.82 L45.60 120.90 L45.90 120.00 L46.20 121.18 L46.50 124.35 L46.80 129.30 L47.10 135.70 L47.40 143.11 L47.70 151.03 L48.00 158.94 L48.30 166.28 L48.60 172.57 L48.90 177.39 L49.20 180.40 L49.50 181.40 L49.80 180.33 L50.10 177.25 L50.40 172.38 L50.70 166.05 L51.00 158.68 L51.30 150.77 L51.60 142.85 L51.90 135.47 L52.20 129.11 L52.50 124.21 L52.80 121.11 L53.10 120.00 L53.40 120.97 L53.70 123.95 L54.00 128.73 L54.30 135.00 L54.60 142.34 L54.90 150.23 L55.20 158.16 L55.50 165.59 L55.80 172.00 L56.10 176.98 L56.40 180.18 L56.70 181.39 L57.00 180.53 L57.30 177.65 L57.60 172.94 L57.90 166.74 L58.20 159.45 L58.50 151.57 L58.80 143.63 L59.10 136.17 L59.40 129.69 L59.70 124.63 L60.00 121.33 L60.30 120.02 L60.60 120.78 L60.90 123.56 L61.20 128.18 L61.50 134.32 L61.80 141.57 L62.10 149.43 L62.40 157.38 L62.70 164.88 L63.00 171.42 L63.30 176.56 L63.60 179.95 L63.90 181.36 L64.20 180.71 L64.50 178.02 L64.80 173.49 L65.10 167.41 L65.40 160.21 L65.70 152.37 L66.00 144.41 L66.30 136.88 L66.60 130.28 L66.90 125.06 L67.20 121.57 L67.50 120.06 L67.80 120.61 L68.10 123.20 L68.40 127.65 L68.70 133.65 L69.00 140.81 L69.30 148.63 L69.60 156.60 L69.90 164.17 L70.20 170.82 L70.50 176.12 L70.80 179.70 L71.10 181.32 L71.40 180.87 L71.70 178.38 L72.00 174.02 L72.30 168.08 L72.60 160.97 L72.90 153.17 L73.20 145.19 L73.50 137.59 L73.80 130.88 L74.10 125.51 L74.40 121.84 L74.70 120.12 L75.00 120.46 L75.30 122.85 L75.60 127.13 L75.90 132.99 L76.20 140.05 L76.50 147.84 L76.80 155.81 L77.10 163.44 L77.40 170.21 L77.70 175.66 L78.00 179.42 L78.30 181.25 L78.60 181.00 L78.90 178.71 L79.20 174.53 L79.50 168.73 L79.80 161.72 L80.10 153.96 L80.40 145.98 L80.70 138.32 L81.00 131.50 L81.30 125.97 L81.60 122.12 L81.90 120.20 L82.20 120.33 L82.50 122.53 L82.80 126.62 L83.10 132.34 L83.40 139.31 L83.70 147.04 L84.00 155.02 L84.30 162.71 L84.60 169.59 L84.90 175.19 L85.20 179.13 L85.50 181.16 L85.80 181.12 L86.10 179.03 L86.40 175.03 L86.70 169.38 L87.00 162.46 L87.30 154.76 L87.60 146.78 L87.90 139.06 L88.20 132.13 L88.50 126.46 L88.80 122.42 L89.10 120.30 L89.40 120.23 L89.70 122.22 L90.00 126.13 L90.30 131.71 L90.60 138.57 L90.90 146.25 L91.20 154.23 L91.50 161.97 L91.80 168.95 L92.10 174.70 L92.40 178.82 L92.70 181.05 L93.00 181.22 L93.30 179.33 L93.60 175.51 L93.90 170.00 L94.20 163.20 L94.50 155.55 L94.80 147.57 L95.10 139.80 L95.40 132.77 L95.70 126.96 L96.00 122.74 L96.30 120.42 L96.60 120.14 L96.90 121.93 L97.20 125.66 L97.50 131.09 L97.80 137.84 L98.10 145.46 L98.40 153.43 L98.70 161.22 L99.00 168.30 L99.30 174.19 L99.60 178.49 L99.90 180.91 L100.20 181.30 L100.50 179.61 L100.80 175.97 L101.10 170.62 L101.40 163.93 L101.70 156.34 L102.00 148.37 L102.30 140.56 L102.60 133.43 L102.90 127.47 L103.20 123.08 L103.50 120.56 L103.80 120.07 L104.10 121.66 L104.40 125.21 L104.70 130.48 L105.00 137.11 L105.30 144.67 L105.60 152.63 L105.90 160.47 L106.20 167.64 L106.50 173.67 L106.80 178.14 L107.10 180.76 L107.40 181.35 L107.70 179.87 L108.00 176.41 L108.30 171.22 L108.60 164.64 L108.90 157.12 L109.20 149.17 L109.50 141.31 L109.80 134.10 L110.10 128.00 L110.40 123.44 L110.70 120.72 L111.00 120.03 L111.30 121.41 L111.60 124.77 L111.90 129.88 L112.20 136.40 L112.50 143.89 L112.80 151.83 L113.10 159.70 L113.40 166.96 L113.70 173.13 L114.00 177.77 L114.30 180.59 L114.60 181.39 L114.90 180.11 L115.20 176.84 L115.50 171.81 L115.80 165.35 L116.10 157.90 L116.40 149.97 L116.70 142.08 L117.00 134.78 L117.30 128.55 L117.60 123.82 L117.90 120.90 L118.20 120.00 L118.50 121.18 L118.80 124.35 L119.10 129.30 L119.40 135.70 L119.70 143.11 L120.00 151.03 L120.30 158.94 L120.60 166.28 L120.90 172.57 L121.20 177.39 L121.50 180.40 L121.80 181.40 L122.10 180.33 L122.40 177.25 L122.70 172.38 L123.00 166.05 L123.30 158.68 L123.60 150.77 L123.90 142.85 L124.20 135.47 L124.50 129.11 L124.80 124.21 L125.10 121.11 L125.40 120.00 L125.70 120.97 L126.00 123.95 L126.30 128.73 L126.60 135.00 L126.90 142.34 L127.20 150.23 L127.50 158.16 L127.80 165.59 L128.10 172.00 L128.40 176.98 L128.70 180.18 L129.00 181.39 L129.30 180.53 L129.60 177.65 L129.90 172.94 L130.20 166.74 L130.50 159.45 L130.80 151.57 L131.10 143.63 L131.40 136.17 L131.70 129.69 L132.00 124.63 L132.30 121.33 L132.60 120.02 L132.90 120.78 L133.20 123.56 L133.50 128.18 L133.80 134.32 L134.10 141.57 L134.40 149.43 L134.70 157.38 L135.00 164.88 L135.30 171.42 L135.60 176.56 L135.90 179.95 L136.20 181.36 L136.50 180.71 L136.80 178.02 L137.10 173.49 L137.40 167.41 L137.70 160.21 L138.00 152.37 L138.30 144.41 L138.60 136.88 L138.90 130.28 L139.20 125.06 L139.50 121.57 L139.80 120.06 L140.10 120.61 L140.40 123.20 L140.70 127.65 L141.00 133.65 L141.30 140.81 L141.60 148.63 L141.90 156.60 L142.20 164.17 L142.50 170.82 L142.80 176.12 L143.10 179.70 L143.40 181.32 L143.70 180.87 L144.00 178.38 L144.30 174.02 L144.60 168.08 L144.90 160.97 L145.20 153.17 L145.50 145.19 L145.80 137.59 L146.10 130.88 L146.40 125.51 L146.70 121.84 L147.00 120.12 L147.30 120.46 L147.60 122.85 L147.90 127.13 L148.20 132.99 L148.50 140.05 L148.80 147.84 L149.10 155.81 L149.40 163.44 L149.70 170.21 L150.00 175.66 L150.30 179.42 L150.60 181.25 L150.90 181.00 L151.20 178.71 L151.50 174.53 L151.80 168.73 L152.10 161.72 L152.40 153.96 L152.70 145.98 L153.00 138.32 L153.30 131.50 L153.60 125.97 L153.90 122.12 L154.20 120.20 L154.50 120.33 L154.80 122.53 L155.10 126.62 L155.40 132.34 L155.70 139.31 L156.00 147.04 L156.30 155.02 L156.60 162.71 L156.90 169.59 L157.20 175.19 L157.50 179.13 L157.80 181.16 L158.10 181.12 L158.40 179.03 L158.70 175.03 L159.00 169.38 L159.30 162.46 L159.60 154.76 L159.90 146.78 L160.20 139.06 L160.50 132.13 L160.80 126.46 L161.10 122.42 L161.40 120.30 L161.70 120.23 L162.00 122.22 L162.30 126.13 L162.60 131.71 L162.90 138.57 L163.20 146.25 L163.50 154.23 L163.80 161.97 L164.10 168.95 L164.40 174.70 L164.70 178.82 L165.00 181.05 L165.30 181.22 L165.60 179.33 L165.90 175.51 L166.20 170.00 L166.50 163.20 L166.80 155.55 L167.10 147.57 L167.40 139.80 L167.70 132.77 L168.00 126.96 L168.30 122.74 L168.60 120.42 L168.90 120.14 L169.20 121.93 L169.50 125.66 L169.80 131.09 L170.10 137.84 L170.40 145.46 L170.70 153.43 L171.00 161.22 L171.30 168.30 L171.60 174.19 L171.90 178.49 L172.20 180.91 L172.50 181.30 L172.80 179.61 L173.10 175.97 L173.40 170.62 L173.70 163.93 L174.00 156.34 L174.30 148.37 L174.60 140.56 L174.90 133.43 L175.20 127.47 L175.50 123.08 L175.80 120.56 L176.10 120.07 L176.40 121.66 L176.70 125.21 L177.00 130.48 L177.30 137.11 L177.60 144.67 L177.90 152.63 L178.20 160.47 L178.50 167.64 L178.80 173.67 L179.10 178.14 L179.40 180.76 L179.70 181.35 L180.00 179.87 L180.30 176.41 L180.60 171.22 L180.90 164.64 L181.20 157.12 L181.50 149.17 L181.80 141.31 L182.10 134.10 L182.40 128.00 L182.70 123.44 L183.00 120.72 L183.30 120.03 L183.60 121.41 L183.90 124.77 L184.20 129.88 L184.50 136.40 L184.80 143.89 L185.10 151.83 L185.40 159.70 L185.70 166.96 L186.00 173.13 L186.30 177.77 L186.60 180.59 L186.90 181.39 L187.20 180.11 L187.50 176.84 L187.80 171.81 L188.10 165.35 L188.40 157.90 L188.70 149.97 L189.00 142.08 L189.30 134.78 L189.60 128.55 L189.90 123.82 L190.20 120.90 L190.50 120.00 L190.80 121.18 L191.10 124.35 L191.40 129.30 L191.70 135.70 L192.00 143.11 L192.30 151.03 L192.60 158.94 L192.90 166.28 L193.20 172.57 L193.50 177.39 L193.80 180.40 L194.10 181.40 L194.40 180.33 L194.70 177.25 L195.00 172.38 L195.30 166.05 L195.60 158.68 L195.90 150.77 L196.20 142.85 L196.50 135.47 L196.80 129.11 L197.10 124.21 L197.40 121.11 L197.70 120.00 L198.00 120.97 L198.30 123.95 L198.60 128.73 L198.90 135.00 L199.20 142.34 L199.50 150.23 L199.80 158.16 L200.10 165.59 L200.40 172.00 L200.70 176.98 L201.00 180.18 L201.30 181.39 L201.60 180.53 L201.90 177.65 L202.20 172.94 L202.50 166.74 L202.80 159.45 L203.10 151.57 L203.40 143.63 L203.70 136.17 L204.00 129.69 L204.30 124.63 L204.60 121.33 L204.90 120.02 L205.20 120.78 L205.50 123.56 L205.80 128.18 L206.10 134.32 L206.40 141.57 L206.70 149.43 L207.00 157.38 L207.30 164.88 L207.60 171.42 L207.90 176.56 L208.20 179.95 L208.50 181.36 L208.80 180.71 L209.10 178.02 L209.40 173.49 L209.70 167.41 L210.00 160.21 L210.30 152.37 L210.60 144.41 L210.90 136.88 L211.20 130.28 L211.50 125.06 L211.80 121.57 L212.10 120.06 L212.40 120.61 L212.70 123.20 L213.00 127.65 L213.30 133.65 L213.60 140.81 L213.90 148.63 L214.20 156.60 L214.50 164.17 L214.80 170.82 L215.10 176.12 L215.40 179.70 L215.70 181.32 L216.00 180.87 L216.30 178.38 L216.60 174.02 L216.90 168.08 L217.20 160.97 L217.50 153.17 L217.80 145.19 L218.10 137.59 L218.40 130.88 L218.70 125.51 L219.00 121.84 L219.30 120.12 L219.60 120.46 L219.90 122.85 L220.20 127.13 L220.50 132.99 L220.80 140.05 L221.10 147.84 L221.40 155.81 L221.70 163.44 L222.00 170.21 L222.30 175.66 L222.60 179.42 L222.90 181.25 L223.20 181.00 L223.50 178.71 L223.80 174.53 L224.10 168.73 L224.40 161.72 L224.70 153.96 L225.00 145.98 L225.30 138.32 L225.60 131.50 L225.90 125.97 L226.20 122.12 L226.50 120.20 L226.80 120.33 L227.10 122.53 L227.40 126.62 L227.70 132.34 L228.00 139.31 L228.30 147.04 L228.60 155.02 L228.90 162.71 L229.20 169.59 L229.50 175.19 L229.80 179.13 L230.10 181.16 L230.40 181.12 L230.70 179.03 L231.00 175.03 L231.30 169.38 L231.60 162.46 L231.90 154.76 L232.20 146.78 L232.50 139.06 L232.80 132.13 L233.10 126.46 L233.40 122.42 L233.70 120.30 L234.00 120.23 L234.30 122.22 L234.60 126.13 L234.90 131.71 L235.20 138.57 L235.50 146.25 L235.80 154.23 L236.10 161.97 L236.40 168.95 L236.70 174.70 L237.00 178.82 L237.30 181.05 L237.60 181.22 L237.90 179.33 L238.20 175.51 L238.50 170.00 L238.80 163.20 L239.10 155.55 L239.40 147.57 L239.70 139.80 L240.00 132.77 L240.30 126.96 L240.60 122.74 L240.90 120.42 L241.20 120.14 L241.50 121.93 L241.80 125.66 L242.10 131.09 L242.40 137.84 L242.70 145.46 L243.00 153.43 L243.30 161.22 L243.60 168.30 L243.90 174.19 L244.20 178.49 L244.50 180.91 L244.80 181.30 L245.10 179.61 L245.40 175.97 L245.70 170.62 L246.00 163.93 L246.30 156.34 L246.60 148.37 L246.90 140.56 L247.20 133.43 L247.50 127.47 L247.80 123.08 L248.10 120.56 L248.40 120.07 L248.70 121.66 L249.00 125.21 L249.30 130.48 L249.60 137.11 L249.90 144.67 L250.20 152.63 L250.50 160.47 L250.80 167.64 L251.10 173.67 L251.40 178.14 L251.70 180.76 L252.00 181.35 L252.30 179.87 L252.60 176.41 L252.90 171.22 L253.20 164.64 L253.50 157.12 L253.80 149.17 L254.10 141.31 L254.40 134.10 L254.70 128.00 L255.00 123.44 L255.30 120.72 L255.60 120.03 L255.90 121.41 L256.20 124.77 L256.50 129.88 L256.80 136.40 L257.10 143.89 L257.40 151.83 L257.70 159.70 L258.00 166.96 L258.30 173.13 L258.60 177.77 L258.90 180.59 L259.20 181.39 L259.50 180.11 L259.80 176.84 L260.10 171.81 L260.40 165.35 L260.70 157.90 L261.00 149.97 L261.30 142.08 L261.60 134.78 L261.90 128.55 L262.20 123.82 L262.50 120.90 L262.80 120.00 L263.10 121.18 L263.40 124.35 L263.70 129.30 L264.00 135.70 L264.30 143.11 L264.60 151.03 L264.90 158.94 L265.20 166.28 L265.50 172.57 L265.80 177.39 L266.10 180.40 L266.40 181.40 L266.70 180.33 L267.00 177.25 L267.30 172.38 L267.60 166.05 L267.90 158.68 L268.20 150.77 L268.50 142.85 L268.80 135.47 L269.10 129.11 L269.40 124.21 L269.70 121.11 L270.00 120.00 L270.30 120.97 L270.60 123.95 L270.90 128.73 L271.20 135.00 L271.50 142.34 L271.80 150.23 L272.10 158.16 L272.40 165.59 L272.70 172.00 L273.00 176.98 L273.30 180.18 L273.60 181.39 L273.90 180.53 L274.20 177.65 L274.50 172.94 L274.80 166.74 L275.10 159.45 L275.40 151.57 L275.70 143.63 L276.00 136.17 L276.30 129.69 L276.60 124.63 L276.90 121.33 L277.20 120.02 L277.50 120.78 L277.80 123.56 L278.10 128.18 L278.40 134.32 L278.70 141.57 L279.00 149.43 L279.30 157.38 L279.60 164.88 L279.90 171.42 L280.20 176.56 L280.50 179.95 L280.80 181.36 L281.10 180.71 L281.40 178.02 L281.70 173.49 L282.00 167.41 L282.30 160.21 L282.60 152.37 L282.90 144.41 L283.20 136.88 L283.50 130.28 L283.80 125.06 L284.10 121.57 L284.40 120.06 L284.70 120.61 L285.00 123.20 L285.30 127.65 L285.60 133.65 L285.90 140.81 L286.20 148.63 L286.50 156.60 L286.80 164.17 L287.10 170.82 L287.40 176.12 L287.70 179.70 L288.00 181.32 L288.30 180.87 L288.60 178.38 L288.90 174.02 L289.20 168.08 L289.50 160.97 L289.80 153.17 L290.10 145.19 L290.40 137.59 L290.70 130.88 L291.00 125.51 L291.30 121.84 L291.60 120.12 L291.90 120.46 L292.20 122.85 L292.50 127.13 L292.80 132.99 L293.10 140.05 L293.40 147.84 L293.70 155.81 L294.00 163.44 L294.30 170.21 L294.60 175.66 L294.90 179.42 L295.20 181.25 L295.50 181.00 L295.80 178.71 L296.10 174.53 L296.40 168.73 L296.70 161.72 L297.00 153.96 L297.30 145.98 L297.60 138.32 L297.90 131.50 L298.20 125.97 L298.50 122.12 L298.80 120.20 L299.10 120.33 L299.40 122.53 L299.70 126.62 L300.00 132.34 L300.30 139.31 L300.60 147.04 L300.90 155.02 L301.20 162.71 L301.50 169.59 L301.80 175.19 L302.10 179.13 L302.40 181.16 L302.70 181.12 L303.00 179.03 L303.30 175.03 L303.60 169.38 L303.90 162.46 L304.20 154.76 L304.50 146.78 L304.80 139.06 L305.10 132.13 L305.40 126.46 L305.70 122.42 L306.00 120.30 L306.30 120.23 L306.60 122.22 L306.90 126.13 L307.20 131.71 L307.50 138.57 L307.80 146.25 L308.10 154.23 L308.40 161.97 L308.70 168.95 L309.00 174.70 L309.30 178.82 L309.60 181.05 L309.90 181.22 L310.20 179.33 L310.50 175.51 L310.80 170.00 L311.10 163.20 L311.40 155.55 L311.70 147.57 L312.00 139.80 L312.30 132.77 L312.60 126.96 L312.90 122.74 L313.20 120.42 L313.50 120.14 L313.80 121.93 L314.10 125.66 L314.40 131.09 L314.70 137.84 L315.00 145.46 L315.30 153.43 L315.60 161.22 L315.90 168.30 L316.20 174.19 L316.50 178.49 L316.80 180.91 L317.10 181.30 L317.40 179.61 L317.70 175.97 L318.00 170.62 L318.30 163.93 L318.60 156.34 L318.90 148.37 L319.20 140.56 L319.50 133.43 L319.80 127.47 L320.10 123.08 L320.40 120.56 L320.70 120.07 L321.00 121.66 L321.30 125.21 L321.60 130.48 L321.90 137.11 L322.20 144.67 L322.50 152.63 L322.80 160.47 L323.10 167.64 L323.40 173.67 L323.70 178.14 L324.00 180.76 L324.30 181.35 L324.60 179.87 L324.90 176.41 L325.20 171.22 L325.50 164.64 L325.80 157.12 L326.10 149.17 L326.40 141.31 L326.70 134.10 L327.00 128.00 L327.30 123.44 L327.60 120.72 L327.90 120.03 L328.20 121.41 L328.50 124.77 L328.80 129.88 L329.10 136.40 L329.40 143.89 L329.70 151.83 L330.00 159.70 L330.30 166.96 L330.60 173.13 L330.90 177.77 L331.20 180.59 L331.50 181.39 L331.80 180.11 L332.10 176.84 L332.40 171.81 L332.70 165.35 L333.00 157.90 L333.30 149.97 L333.60 142.08 L333.90 134.78 L334.20 128.55 L334.50 123.82 L334.80 120.90 L335.10 120.00 L335.40 121.18 L335.70 124.35 L336.00 129.30 L336.30 135.70 L336.60 143.11 L336.90 151.03 L337.20 158.94 L337.50 166.28 L337.80 172.57 L338.10 177.39 L338.40 180.40 L338.70 181.40 L339.00 180.33 L339.30 177.25 L339.60 172.38 L339.90 166.05 L340.20 158.68 L340.50 150.77 L340.80 142.85 L341.10 135.47 L341.40 129.11 L341.70 124.21 L342.00 121.11 L342.30 120.00 L342.60 120.97 L342.90 123.95 L343.20 128.73 L343.50 135.00 L343.80 142.34 L344.10 150.23 L344.40 158.16 L344.70 165.59 L345.00 172.00 L345.30 176.98 L345.60 180.18 L345.90 181.39 L346.20 180.53 L346.50 177.65 L346.80 172.94 L347.10 166.74 L347.40 159.45 L347.70 151.57 L348.00 143.63 L348.30 136.17 L348.60 129.69 L348.90 124.63 L349.20 121.33 L349.50 120.02 L349.80 120.78 L350.10 123.56 L350.40 128.18 L350.70 134.32 L351.00 141.57 L351.30 149.43 L351.60 157.38 L351.90 164.88 L352.20 171.42 L352.50 176.56 L352.80 179.95 L353.10 181.36 L353.40 180.71 L353.70 178.02 L354.00 173.49 L354.30 167.41 L354.60 160.21 L354.90 152.37 L355.20 144.41 L355.50 136.88 L355.80 130.28 L356.10 125.06 L356.40 121.57 L356.70 120.06 L357.00 120.61 L357.30 123.20 L357.60 127.65 L357.90 133.65 L358.20 140.81 L358.50 148.63 L358.80 156.60 L359.10 164.17 L359.40 170.82 L359.70 176.12 L360.00 179.70 L360.30 181.32 L360.60 180.87 L360.90 178.38 L361.20 174.02 L361.50 168.08 L361.80 160.97 L362.10 153.17 L362.40 145.19 L362.70 137.59 L363.00 130.88 L363.30 125.51 L363.60 121.84 L363.90 120.12 L364.20 120.46 L364.50 122.85 L364.80 127.13 L365.10 132.99 L365.40 140.05 L365.70 147.84 L366.00 155.81 L366.30 163.44 L366.60 170.21 L366.90 175.66 L367.20 179.42 L367.50 181.25 L367.80 181.00 L368.10 178.71 L368.40 174.53 L368.70 168.73 L369.00 161.72 L369.30 153.96 L369.60 145.98 L369.90 138.32 L370.20 131.50 L370.50 125.97 L370.80 122.12 L371.10 120.20 L371.40 120.33 L371.70 122.53 L372.00 126.62 L372.30 132.34 L372.60 139.31 L372.90 147.04 L373.20 155.02 L373.50 162.71 L373.80 169.59 L374.10 175.19 L374.40 179.13 L374.70 181.16 L375.00 181.12 L375.30 179.03 L375.60 175.03 L375.90 169.38 L376.20 162.46 L376.50 154.76 L376.80 146.78 L377.10 139.06 L377.40 132.13 L377.70 126.46 L378.00 122.42 L378.30 120.30 L378.60 120.23 L378.90 122.22 L379.20 126.13 L379.50 131.71 L379.80 138.57 L380.10 146.25 L380.40 154.23 L380.70 161.97 L381.00 168.95 L381.30 174.70 L381.60 178.82 L381.90 181.05 L382.20 181.22 L382.50 179.33 L382.80 175.51 L383.10 170.00 L383.40 163.20 L383.70 155.55 L384.00 147.57 L384.30 139.80 L384.60 132.77 L384.90 126.96 L385.20 122.74 L385.50 120.42 L385.80 120.14 L386.10 121.93 L386.40 125.66 L386.70 131.09 L387.00 137.84 L387.30 145.46 L387.60 153.43 L387.90 161.22 L388.20 168.30 L388.50 174.19 L388.80 178.49 L389.10 180.91 L389.40 181.30 L389.70 179.61 L390.00 175.97 L390.30 170.62 L390.60 163.93 L390.90 156.34 L391.20 148.37 L391.50 140.56 L391.80 133.43 L392.10 127.47 L392.40 123.08 L392.70 120.56 L393.00 120.07 L393.30 121.66 L393.60 125.21 L393.90 130.48 L394.20 137.11 L394.50 144.67 L394.80 152.63 L395.10 160.47 L395.40 167.64 L395.70 173.67 L396.00 178.14 L396.30 180.76 L396.60 181.35 L396.90 179.87 L397.20 176.41 L397.50 171.22 L397.80 164.64 L398.10 157.12 L398.40 149.17 L398.70 141.31 L399.00 134.10 L399.30 128.00 L399.60 123.44 L399.90 120.72 L400.20 120.03 L400.50 121.41 L400.80 124.77 L401.10 129.88 L401.40 136.40 L401.70 143.89 L402.00 151.83 L402.30 159.70 L402.60 166.96 L402.90 173.13 L403.20 177.77 L403.50 180.59 L403.80 181.39 L404.10 180.11 L404.40 176.84 L404.70 171.81 L405.00 165.35 L405.30 157.90 L405.60 149.97 L405.90 142.08 L406.20 134.78 L406.50 128.55 L406.80 123.82 L407.10 120.90 L407.40 120.00 L407.70 121.18 L408.00 124.35 L408.30 129.30 L408.60 135.70 L408.90 143.11 L409.20 151.03 L409.50 158.94 L409.80 166.28 L410.10 172.57 L410.40 177.39 L410.70 180.40 L411.00 181.40 L411.30 180.33 L411.60 177.25 L411.90 172.38 L412.20 166.05 L412.50 158.68 L412.80 150.77 L413.10 142.85 L413.40 135.47 L413.70 129.11 L414.00 124.21 L414.30 121.11 L414.60 120.00 L414.90 120.97 L415.20 123.95 L415.50 128.73 L415.80 135.00 L416.10 142.34 L416.40 150.23 L416.70 158.16 L417.00 165.59 L417.30 172.00 L417.60 176.98 L417.90 180.18 L418.20 181.39 L418.50 180.53 L418.80 177.65 L419.10 172.94 L419.40 166.74 L419.70 159.45 L420.00 151.57 L420.30 143.63 L420.60 136.17 L420.90 129.69 L421.20 124.63 L421.50 121.33 L421.80 120.02 L422.10 120.78 L422.40 123.56 L422.70 128.18 L423.00 134.32 L423.30 141.57 L423.60 149.43 L423.90 157.38 L424.20 164.88 L424.50 171.42 L424.80 176.56 L425.10 179.95 L425.40 181.36 L425.70 180.71 L426.00 178.02 L426.30 173.49 L426.60 167.41 L426.90 160.21 L427.20 152.37 L427.50 144.41 L427.80 136.88 L428.10 130.28 L428.40 125.06 L428.70 121.57 L429.00 120.06 L429.30 120.61 L429.60 123.20 L429.90 127.65 L430.20 133.65 L430.50 140.81 L430.80 148.63 L431.10 156.60 L431.40 164.17 L431.70 170.82 L432.00 176.12 L432.30 179.70 L432.60 181.32 L432.90 180.87 L433.20 178.38 L433.50 174.02 L433.80 168.08 L434.10 160.97 L434.40 153.17 L434.70 145.19 L435.00 137.59 L435.30 130.88 L435.60 125.51 L435.90 121.84 L436.20 120.12 L436.50 120.46 L436.80 122.85 L437.10 127.13 L437.40 132.99 L437.70 140.05 L438.00 147.84 L438.30 155.81 L438.60 163.44 L438.90 170.21 L439.20 175.66 L439.50 179.42 L439.80 181.25 L440.10 181.00 L440.40 178.71 L440.70 174.53 L441.00 168.73 L441.30 161.72 L441.60 153.96 L441.90 145.98 L442.20 138.32 L442.50 131.50 L442.80 125.97 L443.10 122.12 L443.40 120.20 L443.70 120.33 L444.00 122.53 L444.30 126.62 L444.60 132.34 L444.90 139.31 L445.20 147.04 L445.50 155.02 L445.80 162.71 L446.10 169.59 L446.40 175.19 L446.70 179.13 L447.00 181.16 L447.30 181.12 L447.60 179.03 L447.90 175.03 L448.20 169.38 L448.50 162.46 L448.80 154.76 L449.10 146.78 L449.40 139.06 L449.70 132.13 L450.00 126.46 L450.30 122.42 L450.60 120.30 L450.90 120.23 L451.20 122.22 L451.50 126.13 L451.80 131.71 L452.10 138.57 L452.40 146.25 L452.70 154.23 L453.00 161.97 L453.30 168.95 L453.60 174.70 L453.90 178.82 L454.20 181.05 L454.50 181.22 L454.80 179.33 L455.10 175.51 L455.40 170.00 L455.70 163.20 L456.00 155.55 L456.30 147.57 L456.60 139.80 L456.90 132.77 L457.20 126.96 L457.50 122.74 L457.80 120.42 L458.10 120.14 L458.40 121.93 L458.70 125.66 L459.00 131.09 L459.30 137.84 L459.60 145.46 L459.90 153.43 L460.20 161.22 L460.50 168.30 L460.80 174.19 L461.10 178.49 L461.40 180.91 L461.70 181.30 L462.00 179.61 L462.30 175.97 L462.60 170.62 L462.90 163.93 L463.20 156.34 L463.50 148.37 L463.80 140.56 L464.10 133.43 L464.40 127.47 L464.70 123.08 L465.00 120.56 L465.30 120.07 L465.60 121.66 L465.90 125.21 L466.20 130.48 L466.50 137.11 L466.80 144.67 L467.10 152.63 L467.40 160.47 L467.70 167.64 L468.00 173.67 L468.30 178.14 L468.60 180.76 L468.90 181.35 L469.20 179.87 L469.50 176.41 L469.80 171.22 L470.10 164.64 L470.40 157.12 L470.70 149.17 L471.00 141.31 L471.30 134.10 L471.60 128.00 L471.90 123.44 L472.20 120.72 L472.50 120.03 L472.80 121.41 L473.10 124.77 L473.40 129.88 L473.70 136.40 L474.00 143.89 L474.30 151.83 L474.60 159.70 L474.90 166.96 L475.20 173.13 L475.50 177.77 L475.80 180.59 L476.10 181.39 L476.40 180.11 L476.70 176.84 L477.00 171.81 L477.30 165.35 L477.60 157.90 L477.90 149.97 L478.20 142.08 L478.50 134.78 L478.80 128.55 L479.10 123.82 L479.40 120.90 L479.70 120.00 L480.00 121.18 L480.30 124.35 L480.60 129.30 L480.90 135.70 L481.20 143.11 L481.50 151.03 L481.80 158.94 L482.10 166.28 L482.40 172.57 L482.70 177.39 L483.00 180.40 L483.30 181.40 L483.60 180.33 L483.90 177.25 L484.20 172.38 L484.50 166.05 L484.80 158.68 L485.10 150.77 L485.40 142.85 L485.70 135.47 L486.00 129.11 L486.30 124.21 L486.60 121.11 L486.90 120.00 L487.20 120.97 L487.50 123.95 L487.80 128.73 L488.10 135.00 L488.40 142.34 L488.70 150.23 L489.00 158.16 L489.30 165.59 L489.60 172.00 L489.90 176.98 L490.20 180.18 L490.50 181.39 L490.80 180.53 L491.10 177.65 L491.40 172.94 L491.70 166.74 L492.00 159.45 L492.30 151.57 L492.60 143.63 L492.90 136.17 L493.20 129.69 L493.50 124.63 L493.80 121.33 L494.10 120.02 L494.40 120.78 L494.70 123.56 L495.00 128.18 L495.30 134.32 L495.60 141.57 L495.90 149.43 L496.20 157.38 L496.50 164.88 L496.80 171.42 L497.10 176.56 L497.40 179.95 L497.70 181.36 L498.00 180.71 L498.30 178.02 L498.60 173.49 L498.90 167.41 L499.20 160.21 L499.50 152.37 L499.80 144.41 L500.10 136.88 L500.40 130.28 L500.70 125.06 L501.00 121.57 L501.30 120.06 L501.60 120.61 L501.90 123.20 L502.20 127.65 L502.50 133.65 L502.80 140.81 L503.10 148.63 L503.40 156.60 L503.70 164.17 L504.00 170.82 L504.30 176.12 L504.60 179.70 L504.90 181.32 L505.20 180.87 L505.50 178.38 L505.80 174.02 L506.10 168.08 L506.40 160.97 L506.70 153.17 L507.00 145.19 L507.30 137.59 L507.60 130.88 L507.90 125.51 L508.20 121.84 L508.50 120.12 L508.80 120.46 L509.10 122.85 L509.40 127.13 L509.70 132.99 L510.00 140.05 L510.30 147.84 L510.60 155.81 L510.90 163.44 L511.20 170.21 L511.50 175.66 L511.80 179.42 L512.10 181.25 L512.40 181.00 L512.70 178.71 L513.00 174.53 L513.30 168.73 L513.60 161.72 L513.90 153.96 L514.20 145.98 L514.50 138.32 L514.80 131.50 L515.10 125.97 L515.40 122.12 L515.70 120.20 L516.00 120.33 L516.30 122.53 L516.60 126.62 L516.90 132.34 L517.20 139.31 L517.50 147.04 L517.80 155.02 L518.10 162.71 L518.40 169.59 L518.70 175.19 L519.00 179.13 L519.30 181.16 L519.60 181.12 L519.90 179.03 L520.20 175.03 L520.50 169.38 L520.80 162.46 L521.10 154.76 L521.40 146.78 L521.70 139.06 L522.00 132.13 L522.30 126.46 L522.60 122.42 L522.90 120.30 L523.20 120.23 L523.50 122.22 L523.80 126.13 L524.10 131.71 L524.40 138.57 L524.70 146.25 L525.00 154.23 L525.30 161.97 L525.60 168.95 L525.90 174.70 L526.20 178.82 L526.50 181.05 L526.80 181.22 L527.10 179.33 L527.40 175.51 L527.70 170.00 L528.00 163.20 L528.30 155.55 L528.60 147.57 L528.90 139.80 L529.20 132.77 L529.50 126.96 L529.80 122.74 L530.10 120.42 L530.40 120.14 L530.70 121.93 L531.00 125.66 L531.30 131.09 L531.60 137.84 L531.90 145.46 L532.20 153.43 L532.50 161.22 L532.80 168.30 L533.10 174.19 L533.40 178.49 L533.70 180.91 L534.00 181.30 L534.30 179.61 L534.60 175.97 L534.90 170.62 L535.20 163.93 L535.50 156.34 L535.80 148.37 L536.10 140.56 L536.40 133.43 L536.70 127.47 L537.00 123.08 L537.30 120.56 L537.60 120.07 L537.90 121.66 L538.20 125.21 L538.50 130.48 L538.80 137.11 L539.10 144.67 L539.40 152.63 L539.70 160.47 L540.00 167.64 L540.30 173.67 L540.60 178.14 L540.90 180.76 L541.20 181.35 L541.50 179.87 L541.80 176.41 L542.10 171.22 L542.40 164.64 L542.70 157.12 L543.00 149.17 L543.30 141.31 L543.60 134.10 L543.90 128.00 L544.20 123.44 L544.50 120.72 L544.80 120.03 L545.10 121.41 L545.40 124.77 L545.70 129.88 L546.00 136.40 L546.30 143.89 L546.60 151.83 L546.90 159.70 L547.20 166.96 L547.50 173.13 L547.80 177.77 L548.10 180.59 L548.40 181.39 L548.70 180.11 L549.00 176.84 L549.30 171.81 L549.60 165.35 L549.90 157.90 L550.20 149.97 L550.50 142.08 L550.80 134.78 L551.10 128.55 L551.40 123.82 L551.70 120.90 L552.00 120.00 L552.30 121.18 L552.60 124.35 L552.90 129.30 L553.20 135.70 L553.50 143.11 L553.80 151.03 L554.10 158.94 L554.40 166.28 L554.70 172.57 L555.00 177.39 L555.30 180.40 L555.60 181.40 L555.90 180.33 L556.20 177.25 L556.50 172.38 L556.80 166.05 L557.10 158.68 L557.40 150.77 L557.70 142.85 L558.00 135.47 L558.30 129.11 L558.60 124.21 L558.90 121.11 L559.20 120.00 L559.50 120.97 L559.80 123.95 L560.10 128.73 L560.40 135.00 L560.70 142.34 L561.00 150.23 L561.30 158.16 L561.60 165.59 L561.90 172.00 L562.20 176.98 L562.50 180.18 L562.80 181.39 L563.10 180.53 L563.40 177.65 L563.70 172.94 L564.00 166.74 L564.30 159.45 L564.60 151.57 L564.90 143.63 L565.20 136.17 L565.50 129.69 L565.80 124.63 L566.10 121.33 L566.40 120.02 L566.70 120.78 L567.00 123.56 L567.30 128.18 L567.60 134.32 L567.90 141.57 L568.20 149.43 L568.50 157.38 L568.80 164.88 L569.10 171.42 L569.40 176.56 L569.70 179.95 L570.00 181.36 L570.30 180.71 L570.60 178.02 L570.90 173.49 L571.20 167.41 L571.50 160.21 L571.80 152.37 L572.10 144.41 L572.40 136.88 L572.70 130.28 L573.00 125.06 L573.30 121.57 L573.60 120.06 L573.90 120.61 L574.20 123.20 L574.50 127.65 L574.80 133.65 L575.10 140.81 L575.40 148.63 L575.70 156.60 L576.00 164.17 L576.30 170.82 L576.60 176.12 L576.90 179.70 L577.20 181.32 L577.50 180.87 L577.80 178.38 L578.10 174.02 L578.40 168.08 L578.70 160.97 L579.00 153.17 L579.30 145.19 L579.60 137.59 L579.90 130.88 L580.20 125.51 L580.50 121.84 L580.80 120.12 L581.10 120.46 L581.40 122.85 L581.70 127.13 L582.00 132.99 L582.30 140.05 L582.60 147.84 L582.90 155.81 L583.20 163.44 L583.50 170.21 L583.80 175.66 L584.10 179.42 L584.40 181.25 L584.70 181.00 L585.00 178.71 L585.30 174.53 L585.60 168.73 L585.90 161.72 L586.20 153.96 L586.50 145.98 L586.80 138.32 L587.10 131.50 L587.40 125.97 L587.70 122.12 L588.00 120.20 L588.30 120.33 L588.60 122.53 L588.90 126.62 L589.20 132.34 L589.50 139.31 L589.80 147.04 L590.10 155.02 L590.40 162.71 L590.70 169.59 L591.00 175.19 L591.30 179.13 L591.60 181.16 L591.90 181.12 L592.20 179.03 L592.50 175.03 L592.80 169.38 L593.10 162.46 L593.40 154.76 L593.70 146.78 L594.00 139.06 L594.30 132.13 L594.60 126.46 L594.90 122.42 L595.20 120.30 L595.50 120.23 L595.80 122.22 L596.10 126.13 L596.40 131.71 L596.70 138.57 L597.00 146.25 L597.30 154.23 L597.60 161.97 L597.90 168.95 L598.20 174.70 L598.50 178.82 L598.80 181.05 L599.10 181.22 L599.40 179.33 L599.70 175.51 L600.00 170.00 L600.30 163.20 L600.60 155.55 L600.90 147.57 L601.20 139.80 L601.50 132.77 L601.80 126.96 L602.10 122.74 L602.40 120.42 L602.70 120.14 L603.00 121.93 L603.30 125.66 L603.60 131.09 L603.90 137.84 L604.20 145.46 L604.50 153.43 L604.80 161.22 L605.10 168.30 L605.40 174.19 L605.70 178.49 L606.00 180.91 L606.30 181.30 L606.60 179.61 L606.90 175.97 L607.20 170.62 L607.50 163.93 L607.80 156.34 L608.10 148.37 L608.40 140.56 L608.70 133.43 L609.00 127.47 L609.30 123.08 L609.60 120.56 L609.90 120.07 L610.20 121.66 L610.50 125.21 L610.80 130.48 L611.10 137.11 L611.40 144.67 L611.70 152.63 L612.00 160.47 L612.30 167.64 L612.60 173.67 L612.90 178.14 L613.20 180.76 L613.50 181.35 L613.80 179.87 L614.10 176.41 L614.40 171.22 L614.70 164.64 L615.00 157.12 L615.30 149.17 L615.60 141.31 L615.90 134.10 L616.20 128.00 L616.50 123.44 L616.80 120.72 L617.10 120.03 L617.40 121.41 L617.70 124.77 L618.00 129.88 L618.30 136.40 L618.60 143.89 L618.90 151.83 L619.20 159.70 L619.50 166.96 L619.80 173.13 L620.10 177.77 L620.40 180.59 L620.70 181.39 L621.00 180.11 L621.30 176.84 L621.60 171.81 L621.90 165.35 L622.20 157.90 L622.50 149.97 L622.80 142.08 L623.10 134.78 L623.40 128.55 L623.70 123.82 L624.00 120.90 L624.30 120.00 L624.60 121.18 L624.90 124.35 L625.20 129.30 L625.50 135.70 L625.80 143.11 L626.10 151.03 L626.40 158.94 L626.70 166.28 L627.00 172.57 L627.30 177.39 L627.60 180.40 L627.90 181.40 L628.20 180.33 L628.50 177.25 L628.80 172.38 L629.10 166.05 L629.40 158.68 L629.70 150.77 L630.00 142.85 L630.30 135.47 L630.60 129.11 L630.90 124.21 L631.20 121.11 L631.50 120.00 L631.80 120.97 L632.10 123.95 L632.40 128.73 L632.70 135.00 L633.00 142.34 L633.30 150.23 L633.60 158.16 L633.90 165.59 L634.20 172.00 L634.50 176.98 L634.80 180.18 L635.10 181.39 L635.40 180.53 L635.70 177.65 L636.00 172.94 L636.30 166.74 L636.60 159.45 L636.90 151.57 L637.20 143.63 L637.50 136.17 L637.80 129.69 L638.10 124.63 L638.40 121.33 L638.70 120.02 L639.00 120.78 L639.30 123.56 L639.60 128.18 L639.90 134.32 L640.20 141.57 L640.50 149.43 L640.80 157.38 L641.10 164.88 L641.40 171.42 L641.70 176.56 L642.00 179.95 L642.30 181.36 L642.60 180.71 L642.90 178.02 L643.20 173.49 L643.50 167.41 L643.80 160.21 L644.10 152.37 L644.40 144.41 L644.70 136.88 L645.00 130.28 L645.30 125.06 L645.60 121.57 L645.90 120.06 L646.20 120.61 L646.50 123.20 L646.80 127.65 L647.10 133.65 L647.40 140.81 L647.70 148.63 L648.00 156.60 L648.30 164.17 L648.60 170.82 L648.90 176.12 L649.20 179.70 L649.50 181.32 L649.80 180.87 L650.10 178.38 L650.40 174.02 L650.70 168.08 L651.00 160.97 L651.30 153.17 L651.60 145.19 L651.90 137.59 L652.20 130.88 L652.50 125.51 L652.80 121.84 L653.10 120.12 L653.40 120.46 L653.70 122.85 L654.00 127.13 L654.30 132.99 L654.60 140.05 L654.90 147.84 L655.20 155.81 L655.50 163.44 L655.80 170.21 L656.10 175.66 L656.40 179.42 L656.70 181.25 L657.00 181.00 L657.30 178.71 L657.60 174.53 L657.90 168.73 L658.20 161.72 L658.50 153.96 L658.80 145.98 L659.10 138.32 L659.40 131.50 L659.70 125.97 L660.00 122.12 L660.30 120.20 L660.60 120.33 L660.90 122.53 L661.20 126.62 L661.50 132.34 L661.80 139.31 L662.10 147.04 L662.40 155.02 L662.70 162.71 L663.00 169.59 L663.30 175.19 L663.60 179.13 L663.90 181.16 L664.20 181.12 L664.50 179.03 L664.80 175.03 L665.10 169.38 L665.40 162.46 L665.70 154.76 L666.00 146.78 L666.30 139.06 L666.60 132.13 L666.90 126.46 L667.20 122.42 L667.50 120.30 L667.80 120.23 L668.10 122.22 L668.40 126.13 L668.70 131.71 L669.00 138.57 L669.30 146.25 L669.60 154.23 L669.90 161.97 L670.20 168.95 L670.50 174.70 L670.80 178.82 L671.10 181.05 L671.40 181.22 L671.70 179.33 L672.00 175.51 L672.30 170.00 L672.60 163.20 L672.90 155.55 L673.20 147.57 L673.50 139.80 L673.80 132.77 L674.10 126.96 L674.40 122.74 L674.70 120.42 L675.00 120.14 L675.30 121.93 L675.60 125.66 L675.90 131.09 L676.20 137.84 L676.50 145.46 L676.80 153.43 L677.10 161.22 L677.40 168.30 L677.70 174.19 L678.00 178.49 L678.30 180.91 L678.60 181.30 L678.90 179.61 L679.20 175.97 L679.50 170.62 L679.80 163.93 L680.10 156.34 L680.40 148.37 L680.70 140.56 L681.00 133.43 L681.30 127.47 L681.60 123.08 L681.90 120.56 L682.20 120.07 L682.50 121.66 L682.80 125.21 L683.10 130.48 L683.40 137.11 L683.70 144.67 L684.00 152.63 L684.30 160.47 L684.60 167.64 L684.90 173.67 L685.20 178.14 L685.50 180.76 L685.80 181.35 L686.10 179.87 L686.40 176.41 L686.70 171.22 L687.00 164.64 L687.30 157.12 L687.60 149.17 L687.90 141.31 L688.20 134.10 L688.50 128.00 L688.80 123.44 L689.10 120.72 L689.40 120.03 L689.70 121.41 L690.00 124.77 L690.30 129.88 L690.60 136.40 L690.90 143.89 L691.20 151.83 L691.50 159.70 L691.80 166.96 L692.10 173.13 L692.40 177.77 L692.70 180.59 L693.00 181.39 L693.30 180.11 L693.60 176.84 L693.90 171.81 L694.20 165.35 L694.50 157.90 L694.80 149.97 L695.10 142.08 L695.40 134.78 L695.70 128.55 L696.00 123.82 L696.30 120.90 L696.60 120.00 L696.90 121.18 L697.20 124.35 L697.50 129.30 L697.80 135.70 L698.10 143.11 L698.40 151.03 L698.70 158.94 L699.00 166.28 L699.30 172.57 L699.60 177.39 L699.90 180.40 L700.20 181.40 L700.50 180.33 L700.80 177.25 L701.10 172.38 L701.40 166.05 L701.70 158.68 L702.00 150.77 L702.30 142.85 L702.60 135.47 L702.90 129.11 L703.20 124.21 L703.50 121.11 L703.80 120.00 L704.10 120.97 L704.40 123.95 L704.70 128.73 L705.00 135.00 L705.30 142.34 L705.60 150.23 L705.90 158.16 L706.20 165.59 L706.50 172.00 L706.80 176.98 L707.10 180.18 L707.40 181.39 L707.70 180.53 L708.00 177.65 L708.30 172.94 L708.60 166.74 L708.90 159.45 L709.20 151.57 L709.50 143.63 L709.80 136.17 L710.10 129.69 L710.40 124.63 L710.70 121.33 L711.00 120.02 L711.30 120.78 L711.60 123.56 L711.90 128.18 L712.20 134.32 L712.50 141.57 L712.80 149.43 L713.10 157.38 L713.40 164.88 L713.70 171.42 L714.00 176.56 L714.30 179.95 L714.60 181.36 L714.90 180.71 L715.20 178.02 L715.50 173.49 L715.80 167.41 L716.10 160.21 L716.40 152.37 L716.70 144.41 L717.00 136.88 L717.30 130.28 L717.60 125.06 L717.90 121.57 L718.20 120.06 L718.50 120.61 L718.80 123.20 L719.10 127.65 L719.40 133.65 L719.70 140.81 L720.00 148.63 L720.30 156.60 L720.60 164.17 L720.90 170.82 L721.20 176.12 L721.50 179.70 L721.80 181.32 L722.10 180.87 L722.40 178.38 L722.70 174.02 L723.00 168.08 L723.30 160.97 L723.60 153.17 L723.90 145.19 L724.20 137.59 L724.50 130.88" fill="none" stroke="#d8c41c" stroke-width="0.58" stroke-linejoin="round"/>
<path d="M1.5 251.2 L69.33 251.20 L69.63 252.40 L70.43 195.40 L71.23 200.12 L72.23 202.30 L73.43 201.70 L105.48 201.70 L105.88 202.70 L106.78 257.50 L107.48 253.09 L108.68 250.70 L110.08 251.20 L177.78 251.20 L178.08 252.40 L178.88 195.40 L179.68 200.12 L180.68 202.30 L181.88 201.70 L185.01 201.70 L185.41 202.70 L186.31 257.50 L187.01 253.09 L188.21 250.70 L189.61 251.20 L199.47 251.20 L199.77 252.40 L200.57 195.40 L201.37 200.12 L202.37 202.30 L203.57 201.70 L206.70 201.70 L207.10 202.70 L208.00 257.50 L208.70 253.09 L209.90 250.70 L211.30 251.20 L221.16 251.20 L221.46 252.40 L222.26 195.40 L223.06 200.12 L224.06 202.30 L225.26 201.70 L235.62 201.70 L236.02 202.70 L236.92 257.50 L237.62 253.09 L238.82 250.70 L240.22 251.20 L372.94 251.20 L373.24 252.40 L374.04 195.40 L374.84 200.12 L375.84 202.30 L377.04 201.70 L380.17 201.70 L380.57 202.70 L381.47 257.50 L382.17 253.09 L383.37 250.70 L384.77 251.20 L437.36 251.20 L437.66 252.40 L438.46 195.40 L439.26 200.12 L440.26 202.30 L441.46 201.70 L444.59 201.70 L444.99 202.70 L445.89 257.50 L446.59 253.09 L447.79 250.70 L449.19 251.20 L495.20 251.20 L495.50 252.40 L496.30 195.40 L497.10 200.12 L498.10 202.30 L499.30 201.70 L509.66 201.70 L510.06 202.70 L510.96 257.50 L511.66 253.09 L512.86 250.70 L514.26 251.20 L531.35 251.20 L531.65 252.40 L532.45 195.40 L533.25 200.12 L534.25 202.30 L535.45 201.70 L538.58 201.70 L538.98 202.70 L539.88 257.50 L540.58 253.09 L541.78 250.70 L543.18 251.20 L545.81 251.20 L546.11 252.40 L546.91 195.40 L547.71 200.12 L548.71 202.30 L549.91 201.70 L553.04 201.70 L553.44 202.70 L554.34 257.50 L555.04 253.09 L556.24 250.70 L557.64 251.20 L589.19 251.20 L589.49 252.40 L590.29 195.40 L591.09 200.12 L592.09 202.30 L593.29 201.70 L596.42 201.70 L596.82 202.70 L597.72 257.50 L598.42 253.09 L599.62 250.70 L601.02 251.20 L724.5 251.2" fill="none" stroke="#1a8492" stroke-width="0.8" stroke-linejoin="round"/>
<path d="M1.5 274.6 L61.80 274.60 L62.20 275.60 L63.10 332.00 L63.80 327.45 L65.00 325.00 L66.40 325.50 L235.30 325.50 L235.60 326.70 L236.40 268.20 L237.20 273.00 L238.20 275.20 L239.40 274.60 L242.40 274.60 L242.80 275.60 L243.70 332.00 L244.40 327.45 L245.60 325.00 L247.00 325.50 L415.60 325.50 L415.90 326.70 L416.70 268.20 L417.50 273.00 L418.50 275.20 L419.70 274.60 L422.80 274.60 L423.20 275.60 L424.10 332.00 L424.80 327.45 L426.00 325.00 L427.40 325.50 L596.30 325.50 L596.60 326.70 L597.40 268.20 L598.20 273.00 L599.20 275.20 L600.40 274.60 L724.5 274.6" fill="none" stroke="#a41636" stroke-width="0.8" stroke-linejoin="round"/>
<path d="M2.6 173.29999999999998 h9.6 l4.6 5.3 l-4.6 5.3 h-9.6 Z" fill="#3c360c" stroke="#c8b420" stroke-width="0.8"/>
<text x="8.3" y="180.2" font-size="4.6" font-weight="bold" fill="#d8c428" text-anchor="middle" font-family='"Liberation Sans", sans-serif' letter-spacing="0.4">C 1</text>
<path d="M2.6 247.2 h9.6 l4.6 5.3 l-4.6 5.3 h-9.6 Z" fill="#0c3238" stroke="#1c8a98" stroke-width="0.8"/>
<text x="8.3" y="254.1" font-size="4.6" font-weight="bold" fill="#2aa4b4" text-anchor="middle" font-family='"Liberation Sans", sans-serif' letter-spacing="0.4">C 2</text>
<path d="M2.6 322.09999999999997 h9.6 l4.6 5.3 l-4.6 5.3 h-9.6 Z" fill="#3c0c16" stroke="#b4183c" stroke-width="0.8"/>
<text x="8.3" y="329.0" font-size="4.6" font-weight="bold" fill="#d02c50" text-anchor="middle" font-family='"Liberation Sans", sans-serif' letter-spacing="0.4">C 3</text>
<rect x="243.3" y="335" width="177" height="2.7" fill="#ea94cc"/>
<path d="M243.3 335 h7 l-3.5 6.7 Z" fill="#ea94cc"/>
<path d="M412.6 335 h7.7 l-3.9 6.7 Z" fill="#ea94cc"/>
<rect x="16.5" y="353.95" width="50.0" height="1.5" fill="#ff1fe4"/>
<rect x="235.7" y="353.95" width="11.300000000000011" height="1.5" fill="#ff1fe4"/>
<rect x="415.7" y="353.95" width="11.900000000000034" height="1.5" fill="#ff1fe4"/>
<rect x="596.6" y="353.95" width="127.89999999999998" height="1.5" fill="#ff1fe4"/>
<path d="M68.2 350.0 H233.9 L236.1 354.7 L233.9 359.4 H68.2 L66 354.7 Z" fill="#000" stroke="#1e8896" stroke-width="0.9"/>
<path d="M248.89999999999998 350.0 H413.8 L416 354.7 L413.8 359.4 H248.89999999999998 L246.7 354.7 Z" fill="#000" stroke="#1e8896" stroke-width="0.9"/>
<path d="M429.5 350.0 H594.6999999999999 L596.9 354.7 L594.6999999999999 359.4 H429.5 L427.3 354.7 Z" fill="#000" stroke="#1e8896" stroke-width="0.9"/>
<rect x="62.15" y="350" width="0.7" height="9.4" fill="#20b020"/>
<rect x="242.35" y="350" width="0.7" height="9.4" fill="#20b020"/>
<rect x="422.95" y="350" width="0.7" height="9.4" fill="#20b020"/>
<rect x="235.95000000000002" y="350" width="0.7" height="9.4" fill="#d02020"/>
<rect x="416.25" y="350" width="0.7" height="9.4" fill="#d02020"/>
<rect x="596.85" y="350" width="0.7" height="9.4" fill="#d02020"/>
<path d="M3.3 349.9 h9 l4.2 4.8 l-4.2 4.8 h-9 Z" fill="#cf9cf0" stroke="#e0c0f8" stroke-width="0.4"/>
<text x="8.6" y="356.2" font-size="4.2" font-weight="bold" fill="#6a4a8a" text-anchor="middle" font-family='"Liberation Sans", sans-serif'>B1</text>
<rect x="22" y="351" width="16.2" height="7.8" fill="#3e3e3e" stroke="#585858" stroke-width="0.6"/>
<rect x="27" y="354.3" width="6" height="0.9" fill="#8a7a90"/>
<rect x="22" y="354.2" width="5" height="1" fill="#ff1fe4" opacity="0.55"/><rect x="33" y="354.2" width="5.2" height="1" fill="#ff1fe4" opacity="0.55"/>
<path d="M4.00 374.2H7.83M11.23 374.2H15.06M18.46 374.2H22.29M25.69 374.2H29.52M32.92 374.2H36.75M40.15 374.2H43.98M47.38 374.2H51.21M54.61 374.2H58.44M61.84 374.2H65.67M69.07 374.2H72.90M76.30 374.2H80.13M83.53 374.2H87.36M90.76 374.2H94.59M97.99 374.2H101.82M105.22 374.2H109.05M112.45 374.2H116.28M119.68 374.2H123.51M126.91 374.2H130.74M134.14 374.2H137.97M141.37 374.2H145.20M148.60 374.2H152.43M155.83 374.2H159.66M163.06 374.2H166.89M170.29 374.2H174.12M177.52 374.2H181.35M184.75 374.2H188.58M191.98 374.2H195.81M199.21 374.2H203.04M206.44 374.2H210.27M213.67 374.2H217.50M220.90 374.2H224.73M228.13 374.2H231.96M235.36 374.2H239.19M242.59 374.2H246.42M249.82 374.2H253.65M257.05 374.2H260.88M264.28 374.2H268.11M271.51 374.2H275.34M278.74 374.2H282.57M285.97 374.2H289.80M293.20 374.2H297.03M300.43 374.2H304.26M307.66 374.2H311.49M314.89 374.2H318.72M322.12 374.2H325.95M329.35 374.2H333.18M336.58 374.2H340.41M343.81 374.2H347.64M351.04 374.2H354.87M358.27 374.2H362.10M365.50 374.2H369.33M372.73 374.2H376.56M379.96 374.2H383.79M387.19 374.2H391.02M394.42 374.2H398.25M401.65 374.2H405.48M408.88 374.2H412.71M416.11 374.2H419.94M423.34 374.2H427.17M430.57 374.2H434.40M437.80 374.2H441.63M445.03 374.2H448.86M452.26 374.2H456.09M459.49 374.2H463.32M466.72 374.2H470.55M473.95 374.2H477.78M481.18 374.2H485.01M488.41 374.2H492.24M495.64 374.2H499.47M502.87 374.2H506.70M510.10 374.2H513.93M517.33 374.2H521.16M524.56 374.2H528.39M531.79 374.2H535.62M539.02 374.2H542.85M546.25 374.2H550.08M553.48 374.2H557.31M560.71 374.2H564.54M567.94 374.2H571.77M575.17 374.2H579.00M582.40 374.2H586.23M589.63 374.2H593.46M596.86 374.2H600.69M604.09 374.2H607.92M611.32 374.2H615.15M618.55 374.2H622.38M625.78 374.2H629.61M633.01 374.2H636.84M640.24 374.2H644.07M647.47 374.2H651.30M654.70 374.2H658.53M661.93 374.2H665.76M669.16 374.2H672.99M676.39 374.2H680.22M683.62 374.2H687.45M690.85 374.2H694.68M698.08 374.2H701.91M705.31 374.2H709.14M712.54 374.2H716.37M719.77 374.2H723.60" stroke="#1717a6" stroke-width="0.95" fill="none"/>
<path d="M1.50 367.6H4.00M7.83 367.6H11.23M15.06 367.6H18.46M22.29 367.6H25.69M29.52 367.6H32.92M36.75 367.6H40.15M43.98 367.6H47.38M51.21 367.6H54.61M58.44 367.6H61.84M65.67 367.6H69.07M72.90 367.6H76.30M80.13 367.6H83.53M87.36 367.6H90.76M94.59 367.6H97.99M101.82 367.6H105.22M109.05 367.6H112.45M116.28 367.6H119.68M123.51 367.6H126.91M130.74 367.6H134.14M137.97 367.6H141.37M145.20 367.6H148.60M152.43 367.6H155.83M159.66 367.6H163.06M166.89 367.6H170.29M174.12 367.6H177.52M181.35 367.6H184.75M188.58 367.6H191.98M195.81 367.6H199.21M203.04 367.6H206.44M210.27 367.6H213.67M217.50 367.6H220.90M224.73 367.6H228.13M231.96 367.6H235.36M239.19 367.6H242.59M246.42 367.6H249.82M253.65 367.6H257.05M260.88 367.6H264.28M268.11 367.6H271.51M275.34 367.6H278.74M282.57 367.6H285.97M289.80 367.6H293.20M297.03 367.6H300.43M304.26 367.6H307.66M311.49 367.6H314.89M318.72 367.6H322.12M325.95 367.6H329.35M333.18 367.6H336.58M340.41 367.6H343.81M347.64 367.6H351.04M354.87 367.6H358.27M362.10 367.6H365.50M369.33 367.6H372.73M376.56 367.6H379.96M383.79 367.6H387.19M391.02 367.6H394.42M398.25 367.6H401.65M405.48 367.6H408.88M412.71 367.6H416.11M419.94 367.6H423.34M427.17 367.6H430.57M434.40 367.6H437.80M441.63 367.6H445.03M448.86 367.6H452.26M456.09 367.6H459.49M463.32 367.6H466.72M470.55 367.6H473.95M477.78 367.6H481.18M485.01 367.6H488.41M492.24 367.6H495.64M499.47 367.6H502.87M506.70 367.6H510.10M513.93 367.6H517.33M521.16 367.6H524.56M528.39 367.6H531.79M535.62 367.6H539.02M542.85 367.6H546.25M550.08 367.6H553.48M557.31 367.6H560.71M564.54 367.6H567.94M571.77 367.6H575.17M579.00 367.6H582.40M586.23 367.6H589.63M593.46 367.6H596.86M600.69 367.6H604.09M607.92 367.6H611.32M615.15 367.6H618.55M622.38 367.6H625.78M629.61 367.6H633.01M636.84 367.6H640.24M644.07 367.6H647.47M651.30 367.6H654.70M658.53 367.6H661.93M665.76 367.6H669.16M672.99 367.6H676.39M680.22 367.6H683.62M687.45 367.6H690.85M694.68 367.6H698.08M701.91 367.6H705.31M709.14 367.6H712.54M716.37 367.6H719.77M723.60 367.6H724.50" stroke="#0d7a10" stroke-width="0.9" fill="none"/>
<path d="M4.00 374.2V367.6M7.83 374.2V367.6M11.23 374.2V367.6M15.06 374.2V367.6M18.46 374.2V367.6M22.29 374.2V367.6M25.69 374.2V367.6M29.52 374.2V367.6M32.92 374.2V367.6M36.75 374.2V367.6M40.15 374.2V367.6M43.98 374.2V367.6M47.38 374.2V367.6M51.21 374.2V367.6M54.61 374.2V367.6M58.44 374.2V367.6M61.84 374.2V367.6M65.67 374.2V367.6M69.07 374.2V367.6M72.90 374.2V367.6M76.30 374.2V367.6M80.13 374.2V367.6M83.53 374.2V367.6M87.36 374.2V367.6M90.76 374.2V367.6M94.59 374.2V367.6M97.99 374.2V367.6M101.82 374.2V367.6M105.22 374.2V367.6M109.05 374.2V367.6M112.45 374.2V367.6M116.28 374.2V367.6M119.68 374.2V367.6M123.51 374.2V367.6M126.91 374.2V367.6M130.74 374.2V367.6M134.14 374.2V367.6M137.97 374.2V367.6M141.37 374.2V367.6M145.20 374.2V367.6M148.60 374.2V367.6M152.43 374.2V367.6M155.83 374.2V367.6M159.66 374.2V367.6M163.06 374.2V367.6M166.89 374.2V367.6M170.29 374.2V367.6M174.12 374.2V367.6M177.52 374.2V367.6M181.35 374.2V367.6M184.75 374.2V367.6M188.58 374.2V367.6M191.98 374.2V367.6M195.81 374.2V367.6M199.21 374.2V367.6M203.04 374.2V367.6M206.44 374.2V367.6M210.27 374.2V367.6M213.67 374.2V367.6M217.50 374.2V367.6M220.90 374.2V367.6M224.73 374.2V367.6M228.13 374.2V367.6M231.96 374.2V367.6M235.36 374.2V367.6M239.19 374.2V367.6M242.59 374.2V367.6M246.42 374.2V367.6M249.82 374.2V367.6M253.65 374.2V367.6M257.05 374.2V367.6M260.88 374.2V367.6M264.28 374.2V367.6M268.11 374.2V367.6M271.51 374.2V367.6M275.34 374.2V367.6M278.74 374.2V367.6M282.57 374.2V367.6M285.97 374.2V367.6M289.80 374.2V367.6M293.20 374.2V367.6M297.03 374.2V367.6M300.43 374.2V367.6M304.26 374.2V367.6M307.66 374.2V367.6M311.49 374.2V367.6M314.89 374.2V367.6M318.72 374.2V367.6M322.12 374.2V367.6M325.95 374.2V367.6M329.35 374.2V367.6M333.18 374.2V367.6M336.58 374.2V367.6M340.41 374.2V367.6M343.81 374.2V367.6M347.64 374.2V367.6M351.04 374.2V367.6M354.87 374.2V367.6M358.27 374.2V367.6M362.10 374.2V367.6M365.50 374.2V367.6M369.33 374.2V367.6M372.73 374.2V367.6M376.56 374.2V367.6M379.96 374.2V367.6M383.79 374.2V367.6M387.19 374.2V367.6M391.02 374.2V367.6M394.42 374.2V367.6M398.25 374.2V367.6M401.65 374.2V367.6M405.48 374.2V367.6M408.88 374.2V367.6M412.71 374.2V367.6M416.11 374.2V367.6M419.94 374.2V367.6M423.34 374.2V367.6M427.17 374.2V367.6M430.57 374.2V367.6M434.40 374.2V367.6M437.80 374.2V367.6M441.63 374.2V367.6M445.03 374.2V367.6M448.86 374.2V367.6M452.26 374.2V367.6M456.09 374.2V367.6M459.49 374.2V367.6M463.32 374.2V367.6M466.72 374.2V367.6M470.55 374.2V367.6M473.95 374.2V367.6M477.78 374.2V367.6M481.18 374.2V367.6M485.01 374.2V367.6M488.41 374.2V367.6M492.24 374.2V367.6M495.64 374.2V367.6M499.47 374.2V367.6M502.87 374.2V367.6M506.70 374.2V367.6M510.10 374.2V367.6M513.93 374.2V367.6M517.33 374.2V367.6M521.16 374.2V367.6M524.56 374.2V367.6M528.39 374.2V367.6M531.79 374.2V367.6M535.62 374.2V367.6M539.02 374.2V367.6M542.85 374.2V367.6M546.25 374.2V367.6M550.08 374.2V367.6M553.48 374.2V367.6M557.31 374.2V367.6M560.71 374.2V367.6M564.54 374.2V367.6M567.94 374.2V367.6M571.77 374.2V367.6M575.17 374.2V367.6M579.00 374.2V367.6M582.40 374.2V367.6M586.23 374.2V367.6M589.63 374.2V367.6M593.46 374.2V367.6M596.86 374.2V367.6M600.69 374.2V367.6M604.09 374.2V367.6M607.92 374.2V367.6M611.32 374.2V367.6M615.15 374.2V367.6M618.55 374.2V367.6M622.38 374.2V367.6M625.78 374.2V367.6M629.61 374.2V367.6M633.01 374.2V367.6M636.84 374.2V367.6M640.24 374.2V367.6M644.07 374.2V367.6M647.47 374.2V367.6M651.30 374.2V367.6M654.70 374.2V367.6M658.53 374.2V367.6M661.93 374.2V367.6M665.76 374.2V367.6M669.16 374.2V367.6M672.99 374.2V367.6M676.39 374.2V367.6M680.22 374.2V367.6M683.62 374.2V367.6M687.45 374.2V367.6M690.85 374.2V367.6M694.68 374.2V367.6M698.08 374.2V367.6M701.91 374.2V367.6M705.31 374.2V367.6M709.14 374.2V367.6M712.54 374.2V367.6M716.37 374.2V367.6M719.77 374.2V367.6M723.60 374.2V367.6" stroke="#8a8a8a" stroke-width="0.6" fill="none"/>
<path d="M1.50 386.6H69.93M106.08 386.6H178.38M185.61 386.6H200.07M207.30 386.6H221.76M236.22 386.6H373.54M380.77 386.6H437.96M445.19 386.6H495.80M510.26 386.6H531.95M539.18 386.6H546.41M553.64 386.6H589.79M597.02 386.6H724.5" stroke="#1717a6" stroke-width="0.95" fill="none"/>
<path d="M69.93 379.4H106.08M178.38 379.4H185.61M200.07 379.4H207.30M221.76 379.4H236.22M373.54 379.4H380.77M437.96 379.4H445.19M495.80 379.4H510.26M531.95 379.4H539.18M546.41 379.4H553.64M589.79 379.4H597.02" stroke="#0d7a10" stroke-width="0.9" fill="none"/>
<path d="M69.93 386.6V379.4M106.08 386.6V379.4M178.38 386.6V379.4M185.61 386.6V379.4M200.07 386.6V379.4M207.30 386.6V379.4M221.76 386.6V379.4M236.22 386.6V379.4M373.54 386.6V379.4M380.77 386.6V379.4M437.96 386.6V379.4M445.19 386.6V379.4M495.80 386.6V379.4M510.26 386.6V379.4M531.95 386.6V379.4M539.18 386.6V379.4M546.41 386.6V379.4M553.64 386.6V379.4M589.79 386.6V379.4M597.02 386.6V379.4" stroke="#8a8a8a" stroke-width="0.6" fill="none"/>
<path d="M62.40 398.3H235.90M243.00 398.3H416.20M423.40 398.3H596.90" stroke="#1717a6" stroke-width="0.95" fill="none"/>
<path d="M1.50 391.2H62.40M235.90 391.2H243.00M416.20 391.2H423.40M596.90 391.2H724.50" stroke="#0d7a10" stroke-width="0.9" fill="none"/>
<path d="M62.40 398.3V391.2M235.90 398.3V391.2M243.00 398.3V391.2M416.20 398.3V391.2M423.40 398.3V391.2M596.90 398.3V391.2" stroke="#8a8a8a" stroke-width="0.6" fill="none"/>
<rect x="4.5" y="366" width="17.5" height="8.8" fill="#000"/>
<rect x="4.5" y="378" width="14" height="9.4" fill="#000"/>
<rect x="4.5" y="392" width="9.5" height="6" fill="#000"/>
<rect x="1" y="12" width="0.8" height="399" fill="#b0b0b0"/>
<rect x="724.2" y="12" width="1" height="399" fill="#c0c0c0"/>
<rect x="1" y="409.9" width="724.5" height="1.3" fill="#4cc24c"/>
</svg>
<div class="t" style="left:8.30px;top:0.57px;font-size:7.38px;line-height:8.86px;color:#f4f4f4;letter-spacing:-0.300px;">File</div>
<div class="t" style="left:35.30px;top:0.57px;font-size:7.38px;line-height:8.86px;color:#f4f4f4;letter-spacing:-0.156px;">Edit</div>
<div class="t" style="left:63.70px;top:0.57px;font-size:7.38px;line-height:8.86px;color:#f4f4f4;letter-spacing:0.122px;">Utility</div>
<div class="t" style="left:99.50px;top:0.57px;font-size:7.38px;line-height:8.86px;color:#f4f4f4;letter-spacing:-0.197px;">Help</div>
<div class="t" style="left:6.80px;top:12.83px;font-size:7.28px;line-height:8.74px;color:#e8e8e8;letter-spacing:-0.182px;">Waveform View</div>
<div class="t" style="left:67.80px;top:95.82px;font-size:4.80px;line-height:5.76px;color:#a8a8a8;">-4 ms</div>
<div class="t" style="left:140.10px;top:95.82px;font-size:4.80px;line-height:5.76px;color:#a8a8a8;">-3 ms</div>
<div class="t" style="left:212.40px;top:95.82px;font-size:4.80px;line-height:5.76px;color:#a8a8a8;">-2 ms</div>
<div class="t" style="left:284.70px;top:95.82px;font-size:4.80px;line-height:5.76px;color:#a8a8a8;">-1 ms</div>
<div class="t" style="left:360.47px;top:95.82px;font-size:4.80px;line-height:5.76px;color:#a8a8a8;">0s</div>
<div class="t" style="left:430.10px;top:95.82px;font-size:4.80px;line-height:5.76px;color:#a8a8a8;">1 ms</div>
<div class="t" style="left:502.40px;top:95.82px;font-size:4.80px;line-height:5.76px;color:#a8a8a8;">2 ms</div>
<div class="t" style="left:574.70px;top:95.82px;font-size:4.80px;line-height:5.76px;color:#a8a8a8;">3 ms</div>
<div class="t" style="left:647.00px;top:95.82px;font-size:4.80px;line-height:5.76px;color:#a8a8a8;">4 ms</div>
<div class="t" style="left:6.60px;top:103.57px;font-size:5.72px;line-height:6.86px;color:#0c0c0c;letter-spacing:-0.184px;">Horizontal Zoom Scale</div>
<div class="b" style="left:67.00px;top:103.80px;width:37.80px;height:6.80px;background:#dcdcdc;"></div>
<div class="t" style="left:76.40px;top:103.90px;font-size:5.50px;line-height:6.60px;color:#111;">1.00 us/div</div>
<div class="b" style="left:111.40px;top:103.80px;width:15.10px;height:6.80px;background:#2c2c2c;border-radius:1px;"></div>
<div class="b" style="left:116.35px;top:106.90px;width:5.20px;height:0.70px;background:#8c8c8c;"></div>
<div class="b" style="left:118.60px;top:104.90px;width:0.70px;height:4.70px;background:#8c8c8c;"></div>
<div class="b" style="left:134.40px;top:103.80px;width:14.60px;height:6.80px;background:#2c2c2c;border-radius:1px;"></div>
<div class="b" style="left:139.10px;top:106.90px;width:5.20px;height:0.70px;background:#8c8c8c;"></div>
<div class="t" style="left:153.60px;top:103.67px;font-size:5.72px;line-height:6.86px;color:#0c0c0c;">(1.00 kx zoom)</div>
<div class="t" style="left:199.00px;top:103.67px;font-size:5.72px;line-height:6.86px;color:#0c0c0c;letter-spacing:-0.074px;">Vertical Zoom</div>
<div class="b" style="left:238.30px;top:103.80px;width:16.10px;height:6.80px;background:#2c2c2c;border-radius:1px;"></div>
<div class="b" style="left:243.75px;top:106.90px;width:5.20px;height:0.70px;background:#8c8c8c;"></div>
<div class="b" style="left:246.00px;top:104.90px;width:0.70px;height:4.70px;background:#8c8c8c;"></div>
<div class="b" style="left:262.00px;top:103.80px;width:15.00px;height:6.80px;background:#2c2c2c;border-radius:1px;"></div>
<div class="b" style="left:266.90px;top:106.90px;width:5.20px;height:0.70px;background:#8c8c8c;"></div>
<div class="t" style="left:281.00px;top:103.67px;font-size:5.72px;line-height:6.86px;color:#0c0c0c;letter-spacing:-0.082px;">(1.00x zoom)</div>
<div class="t" style="left:22.00px;top:341.38px;font-size:7.70px;line-height:9.24px;color:#c486e6;letter-spacing:-0.420px;">SPI</div>
<div class="t" style="left:123.25px;top:349.62px;font-size:8.63px;line-height:10.36px;color:#fff;font-weight:bold;letter-spacing:-0.125px;">Data:7C0093h</div>
<div class="t" style="left:303.55px;top:349.62px;font-size:8.63px;line-height:10.36px;color:#fff;font-weight:bold;letter-spacing:-0.005px;">Data:000020h</div>
<div class="t" style="left:484.30px;top:349.62px;font-size:8.63px;line-height:10.36px;color:#fff;font-weight:bold;letter-spacing:-0.005px;">Data:203141h</div>
<div class="t" style="left:5.60px;top:366.47px;font-size:6.55px;line-height:7.86px;color:#fff;letter-spacing:-0.420px;">SCLK</div>
<div class="t" style="left:5.60px;top:378.77px;font-size:6.55px;line-height:7.86px;color:#fff;letter-spacing:-0.420px;">SDA</div>
<div class="t" style="left:5.60px;top:390.87px;font-size:6.55px;line-height:7.86px;color:#fff;letter-spacing:-0.420px;">SS</div>
<div class="t" style="left:28.60px;top:401.81px;font-size:5.82px;line-height:6.99px;color:#b4b4b4;letter-spacing:-0.095px;">911 µs</div>
<div class="t" style="left:100.90px;top:401.81px;font-size:5.82px;line-height:6.99px;color:#b4b4b4;letter-spacing:-0.167px;">912 µs</div>
<div class="t" style="left:173.20px;top:401.81px;font-size:5.82px;line-height:6.99px;color:#b4b4b4;letter-spacing:-0.167px;">913 µs</div>
<div class="t" style="left:245.50px;top:401.81px;font-size:5.82px;line-height:6.99px;color:#b4b4b4;letter-spacing:-0.167px;">914 µs</div>
<div class="t" style="left:317.80px;top:401.81px;font-size:5.82px;line-height:6.99px;color:#b4b4b4;letter-spacing:-0.167px;">915 µs</div>
<div class="t" style="left:390.10px;top:401.81px;font-size:5.82px;line-height:6.99px;color:#b4b4b4;letter-spacing:-0.167px;">916 µs</div>
<div class="t" style="left:462.40px;top:401.81px;font-size:5.82px;line-height:6.99px;color:#b4b4b4;letter-spacing:-0.167px;">917 µs</div>
<div class="t" style="left:534.70px;top:401.81px;font-size:5.82px;line-height:6.99px;color:#b4b4b4;letter-spacing:-0.167px;">918 µs</div>
<div class="t" style="left:607.00px;top:401.81px;font-size:5.82px;line-height:6.99px;color:#b4b4b4;letter-spacing:-0.167px;">919 µs</div>
<div class="t" style="left:679.30px;top:401.81px;font-size:5.82px;line-height:6.99px;color:#b4b4b4;letter-spacing:-0.167px;">920 µs</div>
<div class="t" style="left:715.50px;top:102.50px;font-size:8.00px;line-height:9.60px;color:#b8b8b8;">×</div>
<div class="t" style="left:706.97px;top:114.64px;font-size:5.20px;line-height:6.24px;color:#7a7014;">3.68 V</div>
<div class="t" style="left:706.97px;top:121.97px;font-size:5.20px;line-height:6.24px;color:#7a7014;">3.22 V</div>
<div class="t" style="left:706.97px;top:129.30px;font-size:5.20px;line-height:6.24px;color:#7a7014;">2.76 V</div>
<div class="t" style="left:706.97px;top:136.63px;font-size:5.20px;line-height:6.24px;color:#7a7014;">2.30 V</div>
<div class="t" style="left:706.97px;top:143.96px;font-size:5.20px;line-height:6.24px;color:#7a7014;">1.84 V</div>
<div class="t" style="left:706.97px;top:151.29px;font-size:5.20px;line-height:6.24px;color:#7a7014;">1.38 V</div>
<div class="t" style="left:704.08px;top:158.62px;font-size:5.20px;line-height:6.24px;color:#7a7014;">920 mV</div>
<div class="t" style="left:704.08px;top:165.95px;font-size:5.20px;line-height:6.24px;color:#7a7014;">460 mV</div>
<div class="t" style="left:714.19px;top:177.28px;font-size:5.20px;line-height:6.24px;color:#7a7014;">0 V</div>
<div class="t" style="left:706.97px;top:188.54px;font-size:5.20px;line-height:6.24px;color:#125a64;">3.68 V</div>
<div class="t" style="left:706.97px;top:195.87px;font-size:5.20px;line-height:6.24px;color:#125a64;">3.22 V</div>
<div class="t" style="left:706.97px;top:203.20px;font-size:5.20px;line-height:6.24px;color:#125a64;">2.76 V</div>
<div class="t" style="left:706.97px;top:210.53px;font-size:5.20px;line-height:6.24px;color:#125a64;">2.30 V</div>
<div class="t" style="left:706.97px;top:217.86px;font-size:5.20px;line-height:6.24px;color:#125a64;">1.84 V</div>
<div class="t" style="left:706.97px;top:225.19px;font-size:5.20px;line-height:6.24px;color:#125a64;">1.38 V</div>
<div class="t" style="left:704.08px;top:232.52px;font-size:5.20px;line-height:6.24px;color:#125a64;">920 mV</div>
<div class="t" style="left:704.08px;top:239.85px;font-size:5.20px;line-height:6.24px;color:#125a64;">460 mV</div>
<div class="t" style="left:714.19px;top:251.18px;font-size:5.20px;line-height:6.24px;color:#125a64;">0 V</div>
<div class="t" style="left:706.97px;top:263.44px;font-size:5.20px;line-height:6.24px;color:#8a1830;">3.68 V</div>
<div class="t" style="left:706.97px;top:270.77px;font-size:5.20px;line-height:6.24px;color:#8a1830;">3.22 V</div>
<div class="t" style="left:706.97px;top:278.10px;font-size:5.20px;line-height:6.24px;color:#8a1830;">2.76 V</div>
<div class="t" style="left:706.97px;top:285.43px;font-size:5.20px;line-height:6.24px;color:#8a1830;">2.30 V</div>
<div class="t" style="left:706.97px;top:292.76px;font-size:5.20px;line-height:6.24px;color:#8a1830;">1.84 V</div>
<div class="t" style="left:706.97px;top:300.09px;font-size:5.20px;line-height:6.24px;color:#8a1830;">1.38 V</div>
<div class="t" style="left:704.08px;top:307.42px;font-size:5.20px;line-height:6.24px;color:#8a1830;">920 mV</div>
<div class="t" style="left:704.08px;top:314.75px;font-size:5.20px;line-height:6.24px;color:#8a1830;">460 mV</div>
<div class="t" style="left:714.19px;top:326.08px;font-size:5.20px;line-height:6.24px;color:#d42444;">0 V</div>
<div class="b" style="left:529.30px;top:0.00px;width:196.20px;height:326.50px;background:rgba(139,139,139,0.88);"></div>
<div class="b" style="left:529.30px;top:0.00px;width:196.20px;height:17.60px;background:#58585c;"></div>
<div class="t" style="left:534.00px;top:4.89px;font-size:6.34px;line-height:7.61px;color:#ececec;letter-spacing:-0.166px;">SEARCH 1</div>
<svg width="12" height="12" viewBox="0 0 12 12" style="left:706px;top:3px"><circle cx="6" cy="6" r="4.7" fill="none" stroke="#ececec" stroke-width="0.9"/><text x="6" y="8.4" font-size="7" font-weight="bold" fill="#ececec" text-anchor="middle" font-family='"Liberation Sans", sans-serif'>?</text></svg>
<div class="t" style="left:534.00px;top:25.93px;font-size:6.45px;line-height:7.74px;color:#1c1c1c;letter-spacing:-0.163px;">Display</div>
<div class="b" style="left:535.60px;top:35.30px;width:19.40px;height:14.20px;background:#29b6ea;border-radius:2px 0 0 2px;"></div>
<div class="b" style="left:554.80px;top:35.30px;width:8.20px;height:14.20px;background:linear-gradient(90deg,#a8a8a8,#cfcfcf 40%,#b4b4b4);border-radius:2px;"></div>
<div class="t" style="left:541.20px;top:38.63px;font-size:6.45px;line-height:7.74px;color:#0c2c3c;letter-spacing:-0.201px;">On</div>
<div class="b" style="left:534.00px;top:56.10px;width:187.50px;height:0.90px;background:#383838;"></div>
<div class="t" style="left:534.00px;top:61.33px;font-size:6.45px;line-height:7.74px;color:#1c1c1c;letter-spacing:-0.208px;">Search Type</div>
<div class="t" style="left:612.80px;top:61.33px;font-size:6.45px;line-height:7.74px;color:#1c1c1c;letter-spacing:-0.172px;">Source</div>
<div class="b" style="left:535.50px;top:70.80px;width:62.80px;height:14.20px;background:#d6d6d6;border:0.5px solid #e4e4e4;"></div>
<div class="t" style="left:537.70px;top:74.09px;font-size:6.34px;line-height:7.61px;color:#1c1c1c;letter-spacing:-0.420px;">Bus</div>
<svg width="5" height="4" viewBox="0 0 5 4" style="left:590.3px;top:76.7px"><path d="M0.3 0.3 h4.4 l-2.2 3 Z" fill="#7a7a7a"/></svg>
<div class="b" style="left:613.80px;top:70.80px;width:63.20px;height:14.20px;background:#d6d6d6;border:0.5px solid #e4e4e4;"></div>
<div class="t" style="left:616.00px;top:74.09px;font-size:6.34px;line-height:7.61px;color:#1c1c1c;letter-spacing:-0.131px;">Bus 1 (SPI)</div>
<svg width="5" height="4" viewBox="0 0 5 4" style="left:669.0px;top:76.7px"><path d="M0.3 0.3 h4.4 l-2.2 3 Z" fill="#7a7a7a"/></svg>
<div class="t" style="left:534.00px;top:90.13px;font-size:6.45px;line-height:7.74px;color:#1c1c1c;letter-spacing:0.040px;">Mark On</div>
<div class="b" style="left:535.50px;top:100.00px;width:62.80px;height:14.20px;background:#d6d6d6;border:0.5px solid #e4e4e4;"></div>
<div class="t" style="left:537.70px;top:103.29px;font-size:6.34px;line-height:7.61px;color:#1c1c1c;letter-spacing:0.050px;">Data</div>
<svg width="5" height="4" viewBox="0 0 5 4" style="left:590.3px;top:105.9px"><path d="M0.3 0.3 h4.4 l-2.2 3 Z" fill="#7a7a7a"/></svg>
<div class="t" style="left:534.00px;top:119.13px;font-size:6.45px;line-height:7.74px;color:#1c1c1c;letter-spacing:-0.032px;">Data Words</div>
<div class="b" style="left:535.40px;top:129.00px;width:46.20px;height:13.60px;background:#dcdcdc;border:0.6px solid #f2f2f2;border-radius:1.5px;"></div>
<div class="t" style="left:574.94px;top:132.06px;font-size:6.40px;line-height:7.68px;color:#1c1c1c;">1</div>
<div class="t" style="left:534.00px;top:147.13px;font-size:6.45px;line-height:7.74px;color:#1c1c1c;letter-spacing:-0.005px;">Data</div>
<div class="b" style="left:534.30px;top:155.50px;width:144.10px;height:92.20px;background:#bababa;border:1.3px solid #4ebada;border-radius:3px;overflow:hidden;"><div class="b" style="left:108.6px;top:0;width:0.8px;height:92px;background:#4ebada"></div><div class="b" style="left:109.4px;top:0;width:34px;height:92px;background:#f6f6f6"></div></div>
<div class="t" style="left:538.00px;top:158.42px;font-size:5.30px;line-height:6.36px;color:#1c1c1c;">Binary</div>
<div class="t" style="left:646.00px;top:158.42px;font-size:5.30px;line-height:6.36px;color:#1c1c1c;">Hex</div>
<div class="t" style="left:538.00px;top:168.03px;font-size:6.45px;line-height:7.74px;color:#1c1c1c;font-family:'Liberation Mono',monospace;letter-spacing:-0.161px;">0000 0000 0000 0000 0010</div>
<div class="t" style="left:538.00px;top:175.23px;font-size:6.45px;line-height:7.74px;color:#1c1c1c;font-family:'Liberation Mono',monospace;letter-spacing:-0.169px;">XXXX</div>
<div class="b" style="left:645.80px;top:166.90px;width:18.80px;height:7.50px;background:#3467b4;"></div>
<div class="b" style="left:645.80px;top:174.40px;width:7.80px;height:7.20px;background:#3467b4;"></div>
<div class="t" style="left:646.00px;top:168.03px;font-size:6.45px;line-height:7.74px;color:#fff;font-family:'Liberation Mono',monospace;letter-spacing:-0.189px;">00 00</div>
<div class="t" style="left:646.00px;top:175.23px;font-size:6.45px;line-height:7.74px;color:#fff;font-family:'Liberation Mono',monospace;letter-spacing:-0.169px;">2X</div>
<div class="b" style="left:533.60px;top:252.05px;width:7.50px;height:7.50px;background:#3c8ee0;border-radius:3.75px;"></div>
<div class="t" style="left:535.11px;top:252.23px;font-size:6.20px;line-height:7.44px;color:#fff;font-weight:bold;">A</div>
<div class="t" style="left:544.40px;top:251.99px;font-size:6.34px;line-height:7.61px;color:#1c1c1c;">selects digit(s)</div>
<div class="b" style="left:533.60px;top:261.05px;width:7.50px;height:7.50px;background:#3c8ee0;border-radius:3.75px;"></div>
<div class="t" style="left:535.11px;top:261.23px;font-size:6.20px;line-height:7.44px;color:#fff;font-weight:bold;">B</div>
<div class="t" style="left:544.40px;top:260.99px;font-size:6.34px;line-height:7.61px;color:#1c1c1c;letter-spacing:-0.034px;">sets its value</div>
<div class="b" style="left:725.50px;top:0.00px;width:68.50px;height:447.00px;background:#2b2b2b;"></div>
<div class="b" style="left:731.00px;top:76.00px;width:63.00px;height:6.00px;background:#212121;"></div>
<div class="b" style="left:725.50px;top:0.00px;width:5.70px;height:412.00px;background:#232323;"></div>
<div class="b" style="left:731.20px;top:10.50px;width:62.40px;height:66.80px;background:#2b2b2b;border:0.9px solid #454545;"></div>
<div class="b" style="left:731.20px;top:80.00px;width:62.40px;height:310.60px;background:#2b2b2b;border:0.9px solid #454545;"></div>
<div class="b" style="left:731.20px;top:390.60px;width:62.40px;height:21.00px;background:#2b2b2b;border:0.9px solid #454545;"></div>
<div class="t" style="left:747.00px;top:11.37px;font-size:6.55px;line-height:7.86px;color:#f2f2f2;font-weight:bold;letter-spacing:-0.125px;">Add New...</div>
<div class="b" style="left:734.30px;top:22.00px;width:26.40px;height:15.00px;background:linear-gradient(#2a2a2a,#222);border:0.9px solid #4e4e4e;border-radius:3px;"></div>
<div class="t" style="left:736.80px;top:25.83px;font-size:6.45px;line-height:7.74px;color:#f0f0f0;letter-spacing:-0.167px;">Cursors</div>
<div class="b" style="left:764.00px;top:22.00px;width:25.70px;height:15.00px;background:linear-gradient(#2a2a2a,#222);border:0.9px solid #4e4e4e;border-radius:3px;"></div>
<div class="t" style="left:769.65px;top:25.83px;font-size:6.45px;line-height:7.74px;color:#f0f0f0;letter-spacing:0.195px;">Note</div>
<div class="b" style="left:734.30px;top:41.00px;width:26.40px;height:14.60px;background:linear-gradient(#2a2a2a,#222);border:0.9px solid #4e4e4e;border-radius:3px;"></div>
<div class="t" style="left:735.20px;top:44.63px;font-size:6.45px;line-height:7.74px;color:#f0f0f0;letter-spacing:-0.070px;">Measure</div>
<div class="b" style="left:764.00px;top:41.00px;width:25.70px;height:14.60px;background:linear-gradient(#2a2a2a,#222);border:0.9px solid #4e4e4e;border-radius:3px;"></div>
<div class="t" style="left:767.25px;top:44.63px;font-size:6.45px;line-height:7.74px;color:#f0f0f0;letter-spacing:-0.205px;">Search</div>
<div class="b" style="left:734.30px;top:59.40px;width:26.40px;height:15.20px;background:linear-gradient(#2a2a2a,#222);border:0.9px solid #4e4e4e;border-radius:3px;"></div>
<div class="t" style="left:737.80px;top:60.03px;font-size:6.45px;line-height:7.74px;color:#f0f0f0;letter-spacing:-0.300px;">Results</div>
<div class="t" style="left:740.20px;top:66.63px;font-size:6.45px;line-height:7.74px;color:#f0f0f0;letter-spacing:-0.163px;">Table</div>
<div class="b" style="left:764.00px;top:59.40px;width:25.70px;height:15.20px;background:linear-gradient(#2a2a2a,#222);border:0.9px solid #4e4e4e;border-radius:3px;"></div>
<div class="t" style="left:770.75px;top:63.33px;font-size:6.45px;line-height:7.74px;color:#f0f0f0;letter-spacing:0.272px;">Plot</div>
<div class="b" style="left:733.00px;top:82.20px;width:61.00px;height:32.50px;background:#d4d4d4;border-radius:2.2px 0 0 2.2px;overflow:hidden;"><div class="b" style="left:0;top:0;width:61px;height:7.6px;background:#cd9cff"></div></div>
<div class="t" style="left:735.50px;top:82.46px;font-size:6.24px;line-height:7.49px;color:#2a1c5a;letter-spacing:-0.172px;">Search 1</div>
<div class="b" style="left:781.80px;top:83.70px;width:9.40px;height:4.90px;background:#15101c;border-radius:2.2px;"></div>
<div class="t" style="left:783.82px;top:83.68px;font-size:4.20px;line-height:5.04px;color:#e8d8ff;font-weight:bold;">B1</div>
<div class="t" style="left:736.00px;top:91.92px;font-size:6.14px;line-height:7.36px;color:#1c1c1c;letter-spacing:-0.259px;">Bus: SPI</div>
<div class="t" style="left:736.00px;top:99.72px;font-size:6.14px;line-height:7.36px;color:#1c1c1c;letter-spacing:-0.093px;">Search: Bus</div>
<div class="t" style="left:736.00px;top:107.42px;font-size:6.14px;line-height:7.36px;color:#1c1c1c;letter-spacing:-0.039px;">Events: 23</div>
<svg width="8" height="7" viewBox="0 0 8 7" style="left:784.8px;top:100.6px"><path d="M0.4 0.4 h6.6 l-3.3 5.6 Z" fill="#d878c8"/></svg>
<svg width="9" height="16" viewBox="0 0 9 16" style="left:725.5px;top:91px"><path d="M0 0.6 L7.6 8 L0 15.2 Z" fill="#7c7c7c"/></svg>
<div class="b" style="left:727.90px;top:207.50px;width:1.60px;height:1.60px;background:#e8e8e8;border-radius:1px;"></div>
<div class="b" style="left:727.90px;top:210.80px;width:1.60px;height:1.60px;background:#e8e8e8;border-radius:1px;"></div>
<div class="b" style="left:727.90px;top:214.10px;width:1.60px;height:1.60px;background:#e8e8e8;border-radius:1px;"></div>
<div class="b" style="left:734.50px;top:394.00px;width:26.30px;height:15.00px;background:#242424;border:0.9px solid #5c5448;border-radius:2.8px;"></div>
<svg width="16" height="13" viewBox="0 0 16 13" style="left:740px;top:395.2px"><path d="M2 0.5 v6.5 h3" fill="none" stroke="#8a8a8a" stroke-width="0.7" stroke-dasharray="1 0.8"/><path d="M2 0.5 h6.5 v2" fill="none" stroke="#8a8a8a" stroke-width="0.7" stroke-dasharray="1 0.8"/><circle cx="8.2" cy="6.8" r="2.5" fill="#3a3a3a" stroke="#c8c8c8" stroke-width="1"/><path d="M10.1 8.7 L13 11.4" stroke="#c8c8c8" stroke-width="1.5" stroke-linecap="round"/><path d="M7 6.8 h2.4 M8.2 5.6 v2.4" stroke="#c8c8c8" stroke-width="0.6"/></svg>
<svg width="14" height="15" viewBox="0 0 14 15" style="left:771.7px;top:394.2px"><ellipse cx="7" cy="2.6" rx="5.6" ry="1.7" fill="#3a3a3a" stroke="#b4b4b4" stroke-width="0.8"/><path d="M1.5 3 L2.7 13 Q7 14.8 11.3 13 L12.5 3" fill="#2e2e2e" stroke="#b4b4b4" stroke-width="0.8"/><path d="M4.2 5 L4.7 12.6 M7 5.2 V13 M9.8 5 L9.3 12.6" stroke="#a0a0a0" stroke-width="0.7"/></svg>
<div class="b" style="left:1.30px;top:413.20px;width:37.10px;height:33.00px;background:#cdcdcd;border-radius:2px;overflow:hidden;"><div class="b" style="left:0;top:0;width:37.1px;height:7.5px;background:#5a5526"></div></div>
<div class="t" style="left:3.90px;top:413.23px;font-size:6.45px;line-height:7.74px;color:#eadc2a;letter-spacing:-0.405px;">Ch 1</div>
<div class="t" style="left:4.10px;top:422.24px;font-size:6.60px;line-height:7.92px;color:#1c1c1c;letter-spacing:-0.114px;">460 mV/div</div>
<div class="t" style="left:4.10px;top:437.84px;font-size:6.60px;line-height:7.92px;color:#1c1c1c;letter-spacing:-0.159px;">50 MHz</div>
<svg width="7" height="5" viewBox="0 0 7 5" style="left:4.5px;top:431px"><path d="M0.4 4.5 L1.4 1.8 Q3 -0.4 4.6 1.8 L5 3 M3.2 4.4 h3 v-2 h-2.4" fill="none" stroke="#3a3a3a" stroke-width="0.6"/></svg>
<svg width="6" height="5" viewBox="0 0 6 5" style="left:31.3px;top:439.6px"><path d="M0.4 0.8 h2.2 v2.6 h2.8" fill="none" stroke="#2a2a2a" stroke-width="0.9"/><path d="M0.4 0.2 h1.6 v1.4 h-1.6 Z M3.6 2.6 h1.8 v1.6 h-1.8Z" fill="#2a2a2a"/></svg>
<div class="b" style="left:40.50px;top:413.20px;width:37.20px;height:33.00px;background:#cdcdcd;border-radius:2px;overflow:hidden;"><div class="b" style="left:0;top:0;width:37.2px;height:7.5px;background:#1f5a5e"></div></div>
<div class="t" style="left:43.10px;top:413.23px;font-size:6.45px;line-height:7.74px;color:#2ec6d8;letter-spacing:-0.405px;">Ch 2</div>
<div class="t" style="left:43.30px;top:422.24px;font-size:6.60px;line-height:7.92px;color:#1c1c1c;letter-spacing:-0.114px;">460 mV/div</div>
<div class="t" style="left:43.30px;top:437.84px;font-size:6.60px;line-height:7.92px;color:#1c1c1c;letter-spacing:-0.159px;">50 MHz</div>
<svg width="7" height="5" viewBox="0 0 7 5" style="left:43.7px;top:431px"><path d="M0.4 4.5 L1.4 1.8 Q3 -0.4 4.6 1.8 L5 3 M3.2 4.4 h3 v-2 h-2.4" fill="none" stroke="#3a3a3a" stroke-width="0.6"/></svg>
<svg width="6" height="5" viewBox="0 0 6 5" style="left:70.5px;top:439.6px"><path d="M0.4 0.8 h2.2 v2.6 h2.8" fill="none" stroke="#2a2a2a" stroke-width="0.9"/><path d="M0.4 0.2 h1.6 v1.4 h-1.6 Z M3.6 2.6 h1.8 v1.6 h-1.8Z" fill="#2a2a2a"/></svg>
<div class="b" style="left:79.80px;top:413.20px;width:37.40px;height:33.00px;background:#cdcdcd;border-radius:2px;overflow:hidden;"><div class="b" style="left:0;top:0;width:37.4px;height:7.5px;background:#4e242c"></div></div>
<div class="t" style="left:82.40px;top:413.23px;font-size:6.45px;line-height:7.74px;color:#f0405a;letter-spacing:-0.405px;">Ch 3</div>
<div class="t" style="left:82.60px;top:422.24px;font-size:6.60px;line-height:7.92px;color:#1c1c1c;letter-spacing:-0.114px;">460 mV/div</div>
<div class="t" style="left:82.60px;top:437.84px;font-size:6.60px;line-height:7.92px;color:#1c1c1c;letter-spacing:-0.159px;">50 MHz</div>
<svg width="7" height="5" viewBox="0 0 7 5" style="left:83.0px;top:431px"><path d="M0.4 4.5 L1.4 1.8 Q3 -0.4 4.6 1.8 L5 3 M3.2 4.4 h3 v-2 h-2.4" fill="none" stroke="#3a3a3a" stroke-width="0.6"/></svg>
<svg width="6" height="5" viewBox="0 0 6 5" style="left:109.8px;top:439.6px"><path d="M0.4 0.8 h2.2 v2.6 h2.8" fill="none" stroke="#2a2a2a" stroke-width="0.9"/><path d="M0.4 0.2 h1.6 v1.4 h-1.6 Z M3.6 2.6 h1.8 v1.6 h-1.8Z" fill="#2a2a2a"/></svg>
<div class="b" style="left:119.20px;top:413.20px;width:37.20px;height:33.00px;background:#cdcdcd;border-radius:2px;overflow:hidden;"><div class="b" style="left:0;top:0;width:37.2px;height:7.5px;background:#cd9cff"></div></div>
<div class="t" style="left:121.80px;top:413.23px;font-size:6.45px;line-height:7.74px;color:#2a1c5a;letter-spacing:-0.258px;">Bus 1</div>
<div class="t" style="left:122.00px;top:422.24px;font-size:6.60px;line-height:7.92px;color:#1c1c1c;">SPI</div>
<div class="b" style="left:311.30px;top:413.00px;width:16.70px;height:33.00px;background:linear-gradient(#2b2b2b,#242424);border:0.9px solid #5a5650;border-radius:2.8px;"></div>
<div class="b" style="left:313.30px;top:416.20px;width:12.70px;height:0.90px;background:#8cc63e;"></div>
<div class="t" style="left:316.98px;top:423.44px;font-size:9.60px;line-height:11.52px;color:#e4e4e4;">4</div>
<div class="b" style="left:330.20px;top:413.00px;width:16.30px;height:33.00px;background:linear-gradient(#2b2b2b,#242424);border:0.9px solid #5a5650;border-radius:2.8px;"></div>
<div class="b" style="left:332.20px;top:416.20px;width:12.30px;height:0.90px;background:#e08a30;"></div>
<div class="t" style="left:335.68px;top:423.44px;font-size:9.60px;line-height:11.52px;color:#e4e4e4;">5</div>
<div class="b" style="left:348.80px;top:413.00px;width:16.50px;height:33.00px;background:linear-gradient(#2b2b2b,#242424);border:0.9px solid #5a5650;border-radius:2.8px;"></div>
<div class="b" style="left:350.80px;top:416.20px;width:12.50px;height:0.90px;background:#3434b0;"></div>
<div class="t" style="left:354.38px;top:423.44px;font-size:9.60px;line-height:11.52px;color:#e4e4e4;">6</div>
<div class="b" style="left:367.60px;top:413.00px;width:16.30px;height:33.00px;background:linear-gradient(#2b2b2b,#242424);border:0.9px solid #5a5650;border-radius:2.8px;"></div>
<div class="b" style="left:369.60px;top:416.20px;width:12.30px;height:0.90px;background:#e0409c;"></div>
<div class="t" style="left:373.08px;top:423.44px;font-size:9.60px;line-height:11.52px;color:#e4e4e4;">7</div>
<div class="b" style="left:386.10px;top:413.00px;width:16.70px;height:33.00px;background:linear-gradient(#2b2b2b,#242424);border:0.9px solid #5a5650;border-radius:2.8px;"></div>
<div class="b" style="left:388.10px;top:416.20px;width:12.70px;height:0.90px;background:#14b484;"></div>
<div class="t" style="left:391.78px;top:423.44px;font-size:9.60px;line-height:11.52px;color:#e4e4e4;">8</div>
<div class="b" style="left:406.50px;top:414.00px;width:0.80px;height:32.00px;background:#1c1c1c;"></div>
<div class="b" style="left:411.20px;top:413.00px;width:16.20px;height:33.00px;background:linear-gradient(#2b2b2b,#242424);border:0.9px solid #5a5650;border-radius:2.8px;"></div>
<div class="b" style="left:413.20px;top:416.20px;width:12.20px;height:0.90px;background:#e08a30;"></div>
<div class="t" style="left:413.40px;top:420.12px;font-size:6.55px;line-height:7.86px;color:#e4e4e4;letter-spacing:0.047px;">Add</div>
<div class="t" style="left:413.10px;top:426.67px;font-size:6.55px;line-height:7.86px;color:#e4e4e4;letter-spacing:-0.236px;">New</div>
<div class="t" style="left:412.00px;top:433.22px;font-size:6.55px;line-height:7.86px;color:#e4e4e4;letter-spacing:0.008px;">Math</div>
<div class="b" style="left:430.20px;top:413.00px;width:15.90px;height:33.00px;background:linear-gradient(#2b2b2b,#242424);border:0.9px solid #5a5650;border-radius:2.8px;"></div>
<div class="b" style="left:432.20px;top:416.20px;width:11.90px;height:0.90px;background:#9c9cac;"></div>
<div class="t" style="left:432.25px;top:420.12px;font-size:6.55px;line-height:7.86px;color:#e4e4e4;letter-spacing:0.047px;">Add</div>
<div class="t" style="left:431.95px;top:426.67px;font-size:6.55px;line-height:7.86px;color:#e4e4e4;letter-spacing:-0.236px;">New</div>
<div class="t" style="left:433.25px;top:433.22px;font-size:6.55px;line-height:7.86px;color:#e4e4e4;letter-spacing:-0.132px;">Ref</div>
<div class="b" style="left:448.70px;top:413.00px;width:16.20px;height:33.00px;background:linear-gradient(#2b2b2b,#242424);border:0.9px solid #5a5650;border-radius:2.8px;"></div>
<div class="b" style="left:450.70px;top:416.20px;width:12.20px;height:0.90px;background:#b45ad4;"></div>
<div class="t" style="left:450.90px;top:420.12px;font-size:6.55px;line-height:7.86px;color:#e4e4e4;letter-spacing:0.047px;">Add</div>
<div class="t" style="left:450.60px;top:426.67px;font-size:6.55px;line-height:7.86px;color:#e4e4e4;letter-spacing:-0.236px;">New</div>
<div class="t" style="left:451.60px;top:433.22px;font-size:6.55px;line-height:7.86px;color:#e4e4e4;letter-spacing:-0.297px;">Bus</div>
<div class="b" style="left:468.80px;top:414.00px;width:0.80px;height:32.00px;background:#1c1c1c;"></div>
<div class="b" style="left:473.20px;top:413.00px;width:16.60px;height:33.00px;background:linear-gradient(#2b2b2b,#242424);border:0.9px solid #5a5650;border-radius:2.8px;"></div>
<div class="b" style="left:475.20px;top:416.20px;width:12.60px;height:0.90px;background:#3a3a3a;"></div>
<div class="t" style="left:474.80px;top:426.67px;font-size:6.55px;line-height:7.86px;color:#e4e4e4;letter-spacing:-0.387px;">DVM</div>
<div class="b" style="left:494.00px;top:413.00px;width:16.70px;height:33.00px;background:linear-gradient(#2b2b2b,#242424);border:0.9px solid #5a5650;border-radius:2.8px;"></div>
<div class="b" style="left:496.00px;top:416.20px;width:12.70px;height:0.90px;background:#3a3a3a;"></div>
<div class="t" style="left:496.25px;top:426.67px;font-size:6.55px;line-height:7.86px;color:#e4e4e4;letter-spacing:-0.420px;">AFG</div>
<div class="b" style="left:515.20px;top:414.00px;width:0.80px;height:32.00px;background:#1c1c1c;"></div>
<div class="b" style="left:519.40px;top:413.20px;width:93.40px;height:33.00px;background:#cdcdcd;border-radius:2px;overflow:hidden;"><div class="b" style="left:0;top:0;width:93.4px;height:7.4px;background:#696969"></div></div>
<div class="t" style="left:521.80px;top:413.04px;font-size:6.76px;line-height:8.11px;color:#e6e6e6;letter-spacing:-0.023px;">Horizontal</div>
<div class="t" style="left:522.50px;top:422.20px;font-size:6.50px;line-height:7.80px;color:#1c1c1c;letter-spacing:-0.100px;">1 ms/div</div>
<div class="t" style="left:522.50px;top:430.10px;font-size:6.50px;line-height:7.80px;color:#1c1c1c;letter-spacing:-0.375px;">SR: 125 MS/s</div>
<div class="t" style="left:522.50px;top:438.00px;font-size:6.50px;line-height:7.80px;color:#1c1c1c;letter-spacing:-0.189px;">RL: 1.25 Mpts</div>
<div class="t" style="left:566.20px;top:422.20px;font-size:6.50px;line-height:7.80px;color:#1c1c1c;letter-spacing:-0.220px;">10 ms</div>
<div class="t" style="left:566.20px;top:430.10px;font-size:6.50px;line-height:7.80px;color:#1c1c1c;letter-spacing:0.012px;">8 ns/pt</div>
<div class="t" style="left:574.00px;top:438.00px;font-size:6.50px;line-height:7.80px;color:#1c1c1c;letter-spacing:-0.137px;">50%</div>
<svg width="5" height="5" viewBox="0 0 5 5" style="left:566.3px;top:439.3px"><path d="M0.3 0.3 h4.2 v2.6 l-2.1 1.8 l-2.1 -1.8 Z" fill="#d07818"/><path d="M1.4 1.2 h2 M2.4 1.2 v2" stroke="#40200a" stroke-width="0.6"/></svg>
<div class="b" style="left:616.80px;top:413.20px;width:66.40px;height:33.00px;background:#cdcdcd;border-radius:2px;overflow:hidden;"><div class="b" style="left:0;top:0;width:66.4px;height:7.4px;background:#696969"></div></div>
<div class="t" style="left:619.20px;top:413.04px;font-size:6.76px;line-height:8.11px;color:#e6e6e6;letter-spacing:-0.109px;">Trigger</div>
<div class="b" style="left:619.40px;top:423.00px;width:12.60px;height:6.60px;background:#cd9cff;border:0.7px solid #3a2a5a;border-radius:1.6px;"></div>
<div class="t" style="left:622.40px;top:423.06px;font-size:5.40px;line-height:6.48px;color:#2a1c5a;">B1</div>
<div class="t" style="left:636.00px;top:422.20px;font-size:6.50px;line-height:7.80px;color:#1c1c1c;">SPI</div>
<div class="t" style="left:619.50px;top:430.10px;font-size:6.50px;line-height:7.80px;color:#1c1c1c;letter-spacing:-0.202px;">SS Active</div>
<div class="b" style="left:687.20px;top:413.20px;width:62.00px;height:33.00px;background:#cdcdcd;border-radius:2px;overflow:hidden;"><div class="b" style="left:0;top:0;width:62.0px;height:7.4px;background:#696969"></div></div>
<div class="t" style="left:689.60px;top:413.04px;font-size:6.76px;line-height:8.11px;color:#e6e6e6;letter-spacing:-0.026px;">Acquisition</div>
<div class="t" style="left:690.00px;top:422.20px;font-size:6.50px;line-height:7.80px;color:#1c1c1c;letter-spacing:0.039px;">Manual,</div>
<div class="t" style="left:721.60px;top:422.20px;font-size:6.50px;line-height:7.80px;color:#1c1c1c;letter-spacing:0.068px;">Analyze</div>
<div class="t" style="left:690.00px;top:430.10px;font-size:6.50px;line-height:7.80px;color:#1c1c1c;letter-spacing:-0.088px;">High Res: 16 bits</div>
<div class="t" style="left:690.00px;top:438.00px;font-size:6.50px;line-height:7.80px;color:#1c1c1c;letter-spacing:-0.156px;">Single: 1/1</div>
<div class="b" style="left:753.50px;top:413.70px;width:36.50px;height:14.10px;background:#ee1c2e;border-radius:2px;"></div>
<div class="t" style="left:761.80px;top:417.31px;font-size:5.82px;line-height:6.99px;color:#fff;font-weight:bold;letter-spacing:-0.288px;">Preview</div>
</div></body></html>
